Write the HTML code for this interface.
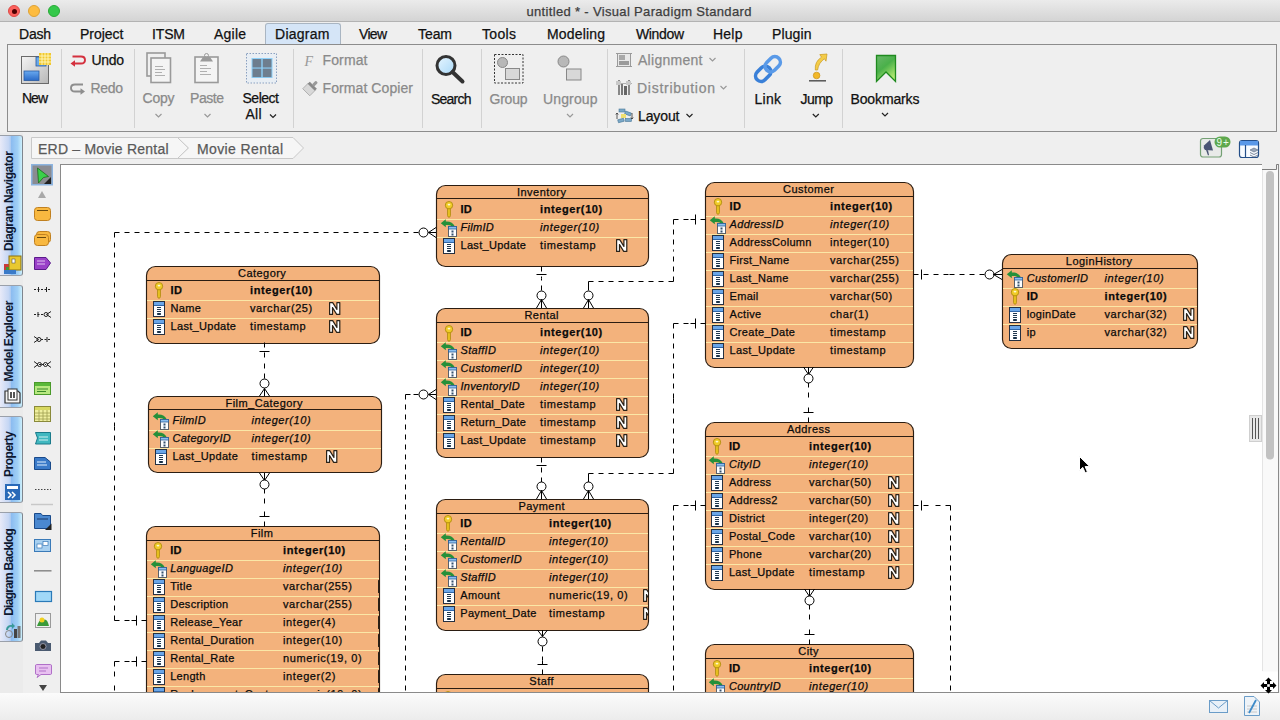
<!DOCTYPE html>
<html><head><meta charset="utf-8"><style>
*{box-sizing:border-box}
html,body{margin:0;padding:0;width:1280px;height:720px;overflow:hidden;background:#efefef;font-family:"Liberation Sans", sans-serif}
.a{position:absolute}
.t{position:absolute;white-space:pre;line-height:1;-webkit-text-stroke:0.25px currentColor}
</style></head><body>
<div class="a" style="left:0;top:0;width:1280px;height:22px;background:linear-gradient(#ebebeb,#d4d4d4);border-bottom:1px solid #b3b3b3"></div><div class="a" style="left:8px;top:5px;width:12px;height:12px;border-radius:50%;background:#fc605c;border:0.5px solid #de4a46"></div><div class="a" style="left:28px;top:5px;width:12px;height:12px;border-radius:50%;background:#fdbc40;border:0.5px solid #dea235"></div><div class="a" style="left:48px;top:5px;width:12px;height:12px;border-radius:50%;background:#34c84a;border:0.5px solid #27aa35"></div><div class="a" style="left:11.5px;top:8.5px;width:5px;height:5px;border-radius:50%;background:#4d0000"></div><div class="a" style="left:264.5px;top:23px;width:76px;height:22px;background:#d5e5f7;border:1px solid #a9b5c2;border-bottom:none;border-radius:3px 3px 0 0"></div><div class="a" style="left:7px;top:44px;width:1270px;height:88px;background:#efefef;border:1px solid #8c8c8c"></div><div class="a" style="left:60.8px;top:49px;width:1px;height:79px;background:#d2d2d2"></div><div class="a" style="left:134.1px;top:49px;width:1px;height:79px;background:#d2d2d2"></div><div class="a" style="left:293.1px;top:49px;width:1px;height:79px;background:#d2d2d2"></div><div class="a" style="left:421.9px;top:49px;width:1px;height:79px;background:#d2d2d2"></div><div class="a" style="left:480.8px;top:49px;width:1px;height:79px;background:#d2d2d2"></div><div class="a" style="left:607.1px;top:49px;width:1px;height:79px;background:#d2d2d2"></div><div class="a" style="left:744.1px;top:49px;width:1px;height:79px;background:#d2d2d2"></div><div class="a" style="left:842.0px;top:49px;width:1px;height:79px;background:#d2d2d2"></div><svg class="a" style="left:0;top:130px" width="320" height="34">
<path d="M31.5 7.5 H177.5 L188.5 18 L177.5 28.5 H31.5 Z" fill="#f6f6f6" stroke="#c9c9c9"/>
<path d="M177.5 7.5 H293 L303.5 18 L293 28.5 H177.5 L188.5 18 Z" fill="#f6f6f6" stroke="#c9c9c9"/>
</svg><div class="a" style="left:60px;top:164px;width:1219px;height:529px;background:#fff;border:1px solid #8a8a8a"></div><div class="a" style="left:0;top:133px;width:23px;height:560px;background:#ebebeb"></div><div class="a" style="left:23px;top:164px;width:37px;height:529px;background:#efefef"></div><svg class="a" style="left:435px;top:184px" width="215" height="84"><rect x="1.5" y="1.5" width="212" height="81" rx="9" ry="9" fill="#f3b27c" stroke="#2b1d12" stroke-width="1.15"/><line x1="1.5" x2="214" y1="14.5" y2="14.5" stroke="#2b1d12" stroke-width="1.15"/><line x1="2" x2="213" y1="35.5" y2="35.5" stroke="#fbe7a6" stroke-width="1"/><line x1="2" x2="213" y1="53.5" y2="53.5" stroke="#fbe7a6" stroke-width="1"/></svg><svg class="a" style="left:145px;top:265px" width="236" height="80"><rect x="1.5" y="1.5" width="233" height="77" rx="9" ry="9" fill="#f3b27c" stroke="#2b1d12" stroke-width="1.15"/><line x1="1.5" x2="234" y1="15.5" y2="15.5" stroke="#2b1d12" stroke-width="1.15"/><line x1="2" x2="234" y1="35.5" y2="35.5" stroke="#fbe7a6" stroke-width="1"/><line x1="2" x2="234" y1="53.5" y2="53.5" stroke="#fbe7a6" stroke-width="1"/></svg><svg class="a" style="left:704px;top:181px" width="211" height="188"><rect x="1.5" y="1.5" width="208" height="185" rx="9" ry="9" fill="#f3b27c" stroke="#2b1d12" stroke-width="1.15"/><line x1="1.5" x2="210" y1="15.5" y2="15.5" stroke="#2b1d12" stroke-width="1.15"/><line x1="2" x2="209" y1="35.5" y2="35.5" stroke="#fbe7a6" stroke-width="1"/><line x1="2" x2="209" y1="53.5" y2="53.5" stroke="#fbe7a6" stroke-width="1"/><line x1="2" x2="209" y1="71.5" y2="71.5" stroke="#fbe7a6" stroke-width="1"/><line x1="2" x2="209" y1="89.5" y2="89.5" stroke="#fbe7a6" stroke-width="1"/><line x1="2" x2="209" y1="107.5" y2="107.5" stroke="#fbe7a6" stroke-width="1"/><line x1="2" x2="209" y1="125.5" y2="125.5" stroke="#fbe7a6" stroke-width="1"/><line x1="2" x2="209" y1="143.5" y2="143.5" stroke="#fbe7a6" stroke-width="1"/><line x1="2" x2="209" y1="161.5" y2="161.5" stroke="#fbe7a6" stroke-width="1"/></svg><svg class="a" style="left:1001px;top:253px" width="198" height="97"><rect x="1.5" y="1.5" width="195" height="94" rx="9" ry="9" fill="#f3b27c" stroke="#2b1d12" stroke-width="1.15"/><line x1="1.5" x2="196" y1="15.5" y2="15.5" stroke="#2b1d12" stroke-width="1.15"/><line x1="2" x2="196" y1="35.5" y2="35.5" stroke="#fbe7a6" stroke-width="1"/><line x1="2" x2="196" y1="53.5" y2="53.5" stroke="#fbe7a6" stroke-width="1"/><line x1="2" x2="196" y1="71.5" y2="71.5" stroke="#fbe7a6" stroke-width="1"/></svg><svg class="a" style="left:435px;top:307px" width="215" height="152"><rect x="1.5" y="1.5" width="212" height="149" rx="9" ry="9" fill="#f3b27c" stroke="#2b1d12" stroke-width="1.15"/><line x1="1.5" x2="214" y1="15.5" y2="15.5" stroke="#2b1d12" stroke-width="1.15"/><line x1="2" x2="213" y1="35.5" y2="35.5" stroke="#fbe7a6" stroke-width="1"/><line x1="2" x2="213" y1="53.5" y2="53.5" stroke="#fbe7a6" stroke-width="1"/><line x1="2" x2="213" y1="71.5" y2="71.5" stroke="#fbe7a6" stroke-width="1"/><line x1="2" x2="213" y1="89.5" y2="89.5" stroke="#fbe7a6" stroke-width="1"/><line x1="2" x2="213" y1="107.5" y2="107.5" stroke="#fbe7a6" stroke-width="1"/><line x1="2" x2="213" y1="125.5" y2="125.5" stroke="#fbe7a6" stroke-width="1"/></svg><svg class="a" style="left:147px;top:395px" width="236" height="79"><rect x="1.5" y="1.5" width="233" height="76" rx="9" ry="9" fill="#f3b27c" stroke="#2b1d12" stroke-width="1.15"/><line x1="1.5" x2="234" y1="14.5" y2="14.5" stroke="#2b1d12" stroke-width="1.15"/><line x1="2" x2="234" y1="35.5" y2="35.5" stroke="#fbe7a6" stroke-width="1"/><line x1="2" x2="234" y1="53.5" y2="53.5" stroke="#fbe7a6" stroke-width="1"/></svg><svg class="a" style="left:145px;top:525px" width="236" height="263"><rect x="1.5" y="1.5" width="233" height="260" rx="9" ry="9" fill="#f3b27c" stroke="#2b1d12" stroke-width="1.15"/><line x1="1.5" x2="234" y1="15.5" y2="15.5" stroke="#2b1d12" stroke-width="1.15"/><line x1="2" x2="234" y1="35.5" y2="35.5" stroke="#fbe7a6" stroke-width="1"/><line x1="2" x2="234" y1="53.5" y2="53.5" stroke="#fbe7a6" stroke-width="1"/><line x1="2" x2="234" y1="71.5" y2="71.5" stroke="#fbe7a6" stroke-width="1"/><line x1="2" x2="234" y1="89.5" y2="89.5" stroke="#fbe7a6" stroke-width="1"/><line x1="2" x2="234" y1="107.5" y2="107.5" stroke="#fbe7a6" stroke-width="1"/><line x1="2" x2="234" y1="125.5" y2="125.5" stroke="#fbe7a6" stroke-width="1"/><line x1="2" x2="234" y1="143.5" y2="143.5" stroke="#fbe7a6" stroke-width="1"/><line x1="2" x2="234" y1="161.5" y2="161.5" stroke="#fbe7a6" stroke-width="1"/></svg><svg class="a" style="left:435px;top:498px" width="215" height="134"><rect x="1.5" y="1.5" width="212" height="131" rx="9" ry="9" fill="#f3b27c" stroke="#2b1d12" stroke-width="1.15"/><line x1="1.5" x2="214" y1="15.5" y2="15.5" stroke="#2b1d12" stroke-width="1.15"/><line x1="2" x2="213" y1="35.5" y2="35.5" stroke="#fbe7a6" stroke-width="1"/><line x1="2" x2="213" y1="53.5" y2="53.5" stroke="#fbe7a6" stroke-width="1"/><line x1="2" x2="213" y1="71.5" y2="71.5" stroke="#fbe7a6" stroke-width="1"/><line x1="2" x2="213" y1="89.5" y2="89.5" stroke="#fbe7a6" stroke-width="1"/><line x1="2" x2="213" y1="107.5" y2="107.5" stroke="#fbe7a6" stroke-width="1"/></svg><svg class="a" style="left:704px;top:421px" width="211" height="170"><rect x="1.5" y="1.5" width="208" height="167" rx="9" ry="9" fill="#f3b27c" stroke="#2b1d12" stroke-width="1.15"/><line x1="1.5" x2="210" y1="15.5" y2="15.5" stroke="#2b1d12" stroke-width="1.15"/><line x1="2" x2="209" y1="35.5" y2="35.5" stroke="#fbe7a6" stroke-width="1"/><line x1="2" x2="209" y1="53.5" y2="53.5" stroke="#fbe7a6" stroke-width="1"/><line x1="2" x2="209" y1="71.5" y2="71.5" stroke="#fbe7a6" stroke-width="1"/><line x1="2" x2="209" y1="89.5" y2="89.5" stroke="#fbe7a6" stroke-width="1"/><line x1="2" x2="209" y1="107.5" y2="107.5" stroke="#fbe7a6" stroke-width="1"/><line x1="2" x2="209" y1="125.5" y2="125.5" stroke="#fbe7a6" stroke-width="1"/><line x1="2" x2="209" y1="143.5" y2="143.5" stroke="#fbe7a6" stroke-width="1"/></svg><svg class="a" style="left:435px;top:673px" width="215" height="123"><rect x="1.5" y="1.5" width="212" height="120" rx="9" ry="9" fill="#f3b27c" stroke="#2b1d12" stroke-width="1.15"/><line x1="1.5" x2="214" y1="15.5" y2="15.5" stroke="#2b1d12" stroke-width="1.15"/><line x1="2" x2="213" y1="35.5" y2="35.5" stroke="#fbe7a6" stroke-width="1"/></svg><svg class="a" style="left:704px;top:643px" width="211" height="123"><rect x="1.5" y="1.5" width="208" height="120" rx="9" ry="9" fill="#f3b27c" stroke="#2b1d12" stroke-width="1.15"/><line x1="1.5" x2="210" y1="15.5" y2="15.5" stroke="#2b1d12" stroke-width="1.15"/><line x1="2" x2="209" y1="35.5" y2="35.5" stroke="#fbe7a6" stroke-width="1"/><line x1="2" x2="209" y1="53.5" y2="53.5" stroke="#fbe7a6" stroke-width="1"/></svg><svg class="a" style="left:0;top:0" width="1280" height="720"><g fill="none" stroke="#000" stroke-width="1"><path d="M146.5 620.5 L130.5 620.5 M114.5 620.5 L130.5 620.5 M114.5 620.5 L114.5 426.5 M114.5 232.5 L114.5 426.5 M114.5 232.5 L266.5 232.5 M418.5 232.5 L266.5 232.5" stroke-dasharray="5 5"/><line x1="136.5" x2="136.5" y1="615.5" y2="625.5"/><ellipse cx="423.5" cy="232.5" rx="4.5" ry="4.5" fill="#fff"/><path d="M428.5 232.5 L436 227.5 M428.5 232.5 L436 232.5 M428.5 232.5 L436 237.5"/><path d="M264.5 342.5 L264.5 360.5 M264.5 378.5 L264.5 360.5" stroke-dasharray="5 5"/><line x1="259.5" x2="269.5" y1="351.5" y2="351.5"/><ellipse cx="264.5" cy="383.5" rx="4.5" ry="4.5" fill="#fff"/><path d="M264.5 388.5 L259.5 396 M264.5 388.5 L264.5 396 M264.5 388.5 L269.5 396"/><path d="M264.5 488.5 L264.5 507.5 M264.5 526.5 L264.5 507.5" stroke-dasharray="5 5"/><path d="M264.5 480.5 L259.5 473 M264.5 480.5 L264.5 473 M264.5 480.5 L269.5 473"/><ellipse cx="264.5" cy="484.5" rx="4.5" ry="4.5" fill="#fff"/><line x1="259.5" x2="269.5" y1="516.5" y2="516.5"/><path d="M541.5 266.5 L541.5 278.5 M541.5 290.5 L541.5 278.5" stroke-dasharray="5 5"/><line x1="536.5" x2="546.5" y1="274.5" y2="274.5"/><ellipse cx="541.5" cy="295.5" rx="4.5" ry="4.5" fill="#fff"/><path d="M541.5 299.5 L536.5 308 M541.5 299.5 L541.5 308 M541.5 299.5 L546.5 308"/><path d="M705.5 219.5 L689.5 219.5 M673.5 219.5 L689.5 219.5 M673.5 219.5 L673.5 250.5 M673.5 281.5 L673.5 250.5 M673.5 281.5 L631 281.5 M588.5 281.5 L631 281.5 M588.5 281.5 L588.5 286 M588.5 290.5 L588.5 286" stroke-dasharray="5 5"/><line x1="695.5" x2="695.5" y1="214.5" y2="224.5"/><ellipse cx="588.5" cy="295.5" rx="4.5" ry="4.5" fill="#fff"/><path d="M588.5 299.5 L583.5 308 M588.5 299.5 L588.5 308 M588.5 299.5 L593.5 308"/><path d="M913.5 274.5 L949 274.5 M984.5 274.5 L949 274.5" stroke-dasharray="5 5"/><line x1="921.5" x2="921.5" y1="269.5" y2="279.5"/><ellipse cx="989.5" cy="274.5" rx="4.5" ry="4.5" fill="#fff"/><path d="M993.5 274.5 L1002 269.5 M993.5 274.5 L1002 274.5 M993.5 274.5 L1002 279.5"/><path d="M541.5 457.5 L541.5 470 M541.5 482.5 L541.5 470" stroke-dasharray="5 5"/><line x1="536.5" x2="546.5" y1="465.5" y2="465.5"/><ellipse cx="541.5" cy="486.5" rx="4.5" ry="4.5" fill="#fff"/><path d="M541.5 490.5 L536.5 499 M541.5 490.5 L541.5 499 M541.5 490.5 L546.5 499"/><path d="M705.5 323.5 L689.5 323.5 M673.5 323.5 L689.5 323.5 M673.5 323.5 L673.5 398.5 M673.5 473.5 L673.5 398.5 M673.5 473.5 L631 473.5 M588.5 473.5 L631 473.5 M588.5 473.5 L588.5 478 M588.5 482.5 L588.5 478" stroke-dasharray="5 5"/><line x1="695.5" x2="695.5" y1="318.5" y2="328.5"/><ellipse cx="588.5" cy="486.5" rx="4.5" ry="4.5" fill="#fff"/><path d="M588.5 490.5 L583.5 499 M588.5 490.5 L588.5 499 M588.5 490.5 L593.5 499"/><path d="M808.5 382.5 L808.5 402.5 M808.5 422.5 L808.5 402.5" stroke-dasharray="5 5"/><path d="M808.5 374.5 L803.5 367 M808.5 374.5 L808.5 367 M808.5 374.5 L813.5 367"/><ellipse cx="808.5" cy="378.5" rx="4.5" ry="4.5" fill="#fff"/><line x1="803.5" x2="813.5" y1="412.5" y2="412.5"/><path d="M809.5 604.5 L809.5 624.5 M809.5 644.5 L809.5 624.5" stroke-dasharray="5 5"/><path d="M809.5 596.5 L804.5 589 M809.5 596.5 L809.5 589 M809.5 596.5 L814.5 589"/><ellipse cx="809.5" cy="600.5" rx="4.5" ry="4.5" fill="#fff"/><line x1="804.5" x2="814.5" y1="634.5" y2="634.5"/><path d="M542.5 646.5 L542.5 660.5 M542.5 674.5 L542.5 660.5" stroke-dasharray="5 5"/><path d="M542.5 636.5 L537.5 630 M542.5 636.5 L542.5 630 M542.5 636.5 L547.5 630"/><ellipse cx="542.5" cy="641.5" rx="4.5" ry="4.5" fill="#fff"/><line x1="537.5" x2="547.5" y1="664.5" y2="664.5"/><path d="M418.5 394.5 L412 394.5 M405.5 394.5 L412 394.5 M405.5 394.5 L405.5 547.5 M405.5 700.5 L405.5 547.5" stroke-dasharray="5 5"/><ellipse cx="423.5" cy="394.5" rx="4.5" ry="4.5" fill="#fff"/><path d="M428.5 394.5 L436 389.5 M428.5 394.5 L436 394.5 M428.5 394.5 L436 399.5"/><path d="M146.5 661.5 L130.5 661.5 M114.5 661.5 L130.5 661.5 M114.5 661.5 L114.5 681 M114.5 700.5 L114.5 681" stroke-dasharray="5 5"/><line x1="136.5" x2="136.5" y1="656.5" y2="666.5"/><path d="M705.5 505.5 L689.5 505.5 M673.5 505.5 L689.5 505.5 M673.5 505.5 L673.5 603 M673.5 700.5 L673.5 603" stroke-dasharray="5 5"/><line x1="695.5" x2="695.5" y1="500.5" y2="510.5"/><path d="M913.5 505.5 L932 505.5 M950.5 505.5 L932 505.5 M950.5 505.5 L950.5 603 M950.5 700.5 L950.5 603" stroke-dasharray="5 5"/><line x1="921.5" x2="921.5" y1="500.5" y2="510.5"/></g></svg><svg class="a" style="left:0;top:44px" width="940" height="88" viewBox="0 44 940 88">
<defs>
<linearGradient id="gNew" x1="0" y1="0" x2="1" y2="1"><stop offset="0" stop-color="#f4f4f4"/><stop offset="1" stop-color="#b8b8b8"/></linearGradient>
<linearGradient id="gBlue" x1="0" y1="0" x2="0" y2="1"><stop offset="0" stop-color="#6aaaf0"/><stop offset="1" stop-color="#2a6ac8"/></linearGradient>
<linearGradient id="gBk" x1="0" y1="0" x2="0.6" y2="1"><stop offset="0" stop-color="#6ab86a"/><stop offset="0.5" stop-color="#4ab04a"/><stop offset="1" stop-color="#b0e870"/></linearGradient>
<linearGradient id="gLens" x1="0" y1="0" x2="1" y2="1"><stop offset="0" stop-color="#e8f6ff"/><stop offset="1" stop-color="#a8d8f8"/></linearGradient>
</defs>
<!-- New -->
<rect x="21.5" y="56.5" width="27" height="27" fill="url(#gNew)" stroke="#6a6a6a"/>
<rect x="24" y="71" width="15" height="9.5" fill="url(#gBlue)" stroke="#2a5aa0" stroke-width="0.8"/>
<rect x="36" y="57" width="10" height="9" fill="#6aa8e8" stroke="#2a5aa0" stroke-width="0.8"/>
<rect x="39" y="53" width="12" height="12" fill="#f0c830"/>
<path d="M42 53 V65 M45 53 V65 M48 53 V65 M39 56 H51 M39 59 H51 M39 62 H51" stroke="#fff8c0" stroke-width="0.9"/>
<!-- Undo -->
<path d="M72.5 56.5 H81 Q85 56.5 85 60 Q85 63.5 81 63.5 H74" fill="none" stroke="#d4303e" stroke-width="1.9"/>
<path d="M70.5 63.5 L75 60.3 V66.7 Z" fill="#d4303e"/>
<!-- Redo -->
<path d="M83 84.5 H75 Q71 84.5 71 88 Q71 91.5 75 91.5 H82" fill="none" stroke="#8e8e8e" stroke-width="1.9"/>
<path d="M85 91.5 L80.5 88.3 V94.7 Z" fill="#8e8e8e"/>
<!-- Copy -->
<rect x="147" y="53" width="18" height="23" fill="#f0f0f0" stroke="#9a9a9a" stroke-width="1.6"/>
<rect x="151" y="58" width="19.5" height="24.5" fill="#f4f4f4" stroke="#9a9a9a" stroke-width="1.6"/>
<path d="M155 66.5 H163 M155 69.5 H165 M155 72.5 H162 M155 75.5 H165" stroke="#b0b0b0"/>
<!-- Paste -->
<rect x="195" y="57" width="23" height="25.5" fill="#f4f4f4" stroke="#9a9a9a" stroke-width="1.6"/>
<path d="M200 61.5 L203 57 H210 L213 61.5 Z" fill="#9a9a9a"/><circle cx="206.5" cy="55.5" r="2" fill="none" stroke="#9a9a9a"/>
<path d="M200 65.5 H207 M200 68.5 H211 M200 71.5 H207 M200 74.5 H211" stroke="#b0b0b0"/>
<!-- Select All -->
<rect x="246.5" y="53.5" width="30" height="29.5" fill="#e8eef4" stroke="#8aa0c0" stroke-dasharray="1.5 1.5"/>
<rect x="251.5" y="58" width="21" height="20" fill="#8ed0f8"/>
<rect x="252.5" y="59" width="8.8" height="8.5" fill="#6e7e8e"/><rect x="262.7" y="59" width="8.8" height="8.5" fill="#6e7e8e"/>
<rect x="252.5" y="68.6" width="8.8" height="8.5" fill="#6e7e8e"/><rect x="262.7" y="68.6" width="8.8" height="8.5" fill="#6e7e8e"/>
<!-- Format F -->
<text x="304.5" y="65.5" font-family="Liberation Serif" font-style="italic" font-size="14" fill="#9a9a9a">F</text>
<!-- Format copier brush -->
<g transform="rotate(45 310.5 88)">
<rect x="305.5" y="86" width="10" height="8" fill="#d8d8d8" stroke="#a8a8a8" stroke-width="0.8"/>
<rect x="305.5" y="84" width="10" height="3" fill="#8a8a8a"/>
<rect x="309" y="79" width="3" height="5.5" rx="1" fill="#9a9a9a"/>
</g>
<!-- Search -->
<circle cx="446" cy="65.5" r="9" fill="url(#gLens)" stroke="#333" stroke-width="3"/>
<path d="M452.5 72 L462.5 81.5" stroke="#333" stroke-width="4" stroke-linecap="round"/>
<!-- Group -->
<rect x="494.5" y="54.5" width="28.5" height="28.5" fill="none" stroke="#333" stroke-dasharray="2 1.5"/>
<circle cx="502.5" cy="62.5" r="5" fill="#b8b8b8" stroke="#888"/>
<rect x="505.5" y="68.5" width="14" height="11" fill="#d8d8d8" stroke="#888"/>
<!-- Ungroup -->
<circle cx="563.5" cy="61.5" r="5.5" fill="#b8b8b8" stroke="#888"/>
<rect x="566.5" y="69" width="14.5" height="11" fill="#d8d8d8" stroke="#888"/>
<!-- Alignment icon -->
<rect x="617.5" y="53.5" width="13" height="13" fill="#e8e8e8" stroke="#9a9a9a"/>
<path d="M616 53.5 H619 M629 53.5 H632 M616 66.5 H619 M629 66.5 H632" stroke="#9a9a9a"/>
<rect x="619" y="55" width="6" height="5" fill="#a8a8a8"/><rect x="619" y="61" width="10" height="4" fill="#9a9a9a"/>
<!-- Distribution icon -->
<path d="M616 83.5 H632" stroke="#b0b0b0"/>
<rect x="618" y="80" width="2" height="15" fill="#888"/><rect x="621" y="84" width="2" height="11" fill="#777"/><rect x="624" y="86" width="3" height="9" fill="#666"/><rect x="628" y="80" width="2" height="15" fill="#888"/>
<rect x="616" y="81" width="5" height="4" fill="#c8c8c8"/><rect x="626" y="81" width="5" height="4" fill="#c8c8c8"/>
<!-- Layout icon -->
<rect x="619" y="109" width="6" height="3" fill="#7aa8c8" stroke="#4a7898" stroke-width="0.6"/>
<rect x="625" y="112" width="6" height="3" fill="#7aa8c8" stroke="#4a7898" stroke-width="0.6" transform="rotate(20 628 113.5)"/>
<rect x="621" y="114" width="5" height="4" fill="#f0e070"/>
<rect x="618" y="119" width="6" height="3" fill="#7aa8c8" stroke="#4a7898" stroke-width="0.6" transform="rotate(-15 621 120.5)"/>
<rect x="625.5" y="118.5" width="6" height="3" fill="#7aa8c8" stroke="#4a7898" stroke-width="0.6"/>
<path d="M617 113 V119 M615.8 114.5 L617 113 L618.2 114.5 M632 113 V119 M630.8 117.5 L632 119 L633.2 117.5" stroke="#333" stroke-width="0.8" fill="none"/>
<!-- Link -->
<g transform="rotate(-45 768.5 68.5)"><rect x="752.5" y="63" width="17" height="11" rx="5.5" fill="none" stroke="#3a80d8" stroke-width="3.6"/><rect x="766" y="63" width="17" height="11" rx="5.5" fill="none" stroke="#5a9ae8" stroke-width="3.6"/></g>
<!-- Jump -->
<path d="M815.3 70 Q814.5 61.5 821.5 57.2 L819.8 54.6 L827 54 L826 61.2 L824.4 58.8 Q818.6 62.8 817.6 70 Z" fill="#f4cc48" stroke="#c89a20" stroke-width="0.7"/>
<circle cx="816.6" cy="75.5" r="3.3" fill="#f2b828" stroke="#c8901a" stroke-width="0.7"/>
<line x1="809" y1="80.8" x2="826" y2="80.8" stroke="#555" stroke-width="1.5"/>
<!-- Bookmark -->
<path d="M876.5 55.5 H895.5 V81.5 L886 72 L876.5 81.5 Z" fill="url(#gBk)" stroke="#1f8a1f" stroke-width="1.3"/>
<!-- chevrons -->
<g fill="none" stroke="#999" stroke-width="1.2">
<path d="M155.5 114 L158.5 117 L161.5 114"/><path d="M204.5 114 L207.5 117 L210.5 114"/><path d="M567 114 L570 117 L573 114"/>
<path d="M709.5 58 L712.5 61 L715.5 58"/><path d="M720.5 86 L723.5 89 L726.5 86"/>
</g>
<g fill="none" stroke="#222" stroke-width="1.2">
<path d="M270 114.5 L273 117.5 L276 114.5"/><path d="M686.5 114 L689.5 117 L692.5 114"/><path d="M812.8 114 L815.8 117 L818.8 114"/><path d="M882 113 L885 116 L888 113"/>
</g>
</svg><svg class="a" style="left:1196px;top:134px" width="70" height="28">
<rect x="4.5" y="4.5" width="21" height="18.5" rx="2.5" fill="#e8eae8" stroke="#74a074" stroke-width="1.2"/>
<path d="M8 11.5 Q7 14 9 16 L17 16.5 L14 6 Z" fill="#4a5474"/><path d="M10 16 L12 21.5 L13 21 L12 16.3 Z" fill="#4a5474"/>
<rect x="18.5" y="2.5" width="16" height="11" rx="5.5" fill="#5ea84e"/>
<text x="20.5" y="11.6" font-family="Liberation Sans" font-size="10" letter-spacing="1" fill="#eaffea">9+</text>
<rect x="43.5" y="6.5" width="19" height="17" rx="2.5" fill="#f8fbff" stroke="#244e88" stroke-width="1.2"/>
<rect x="44" y="7" width="18" height="4.5" fill="#5a98e8"/>
<line x1="49.5" y1="11" x2="49.5" y2="23" stroke="#244e88" stroke-width="1.2"/>
<path d="M54 16 L58 14 L62 16 L58 18 Z" fill="#9aa6b8" stroke="#5a6a80" stroke-width="0.6"/><path d="M54 18.5 L58 20.5 L62 18.5" fill="none" stroke="#5a6a80" stroke-width="0.8"/><path d="M54 21 L58 23 L62 21" fill="none" stroke="#5a6a80" stroke-width="0.8"/>
</svg>
<div class="t" style="left:526.50px;top:4.60px;font-size:13px;color:#3d3d3d;letter-spacing:0.332px">untitled * - Visual Paradigm Standard</div>
<div class="t" style="left:19.00px;top:26.65px;font-size:14px;color:#111;letter-spacing:-0.229px">Dash</div>
<div class="t" style="left:80.00px;top:26.65px;font-size:14px;color:#111;letter-spacing:-0.013px">Project</div>
<div class="t" style="left:152.00px;top:26.65px;font-size:14px;color:#111;letter-spacing:-0.151px">ITSM</div>
<div class="t" style="left:214.00px;top:26.65px;font-size:14px;color:#111;letter-spacing:0.215px">Agile</div>
<div class="t" style="left:275.00px;top:26.65px;font-size:14px;color:#111;letter-spacing:0.266px">Diagram</div>
<div class="t" style="left:359.00px;top:26.65px;font-size:14px;color:#111;letter-spacing:-0.698px">View</div>
<div class="t" style="left:418.00px;top:26.65px;font-size:14px;color:#111;letter-spacing:-0.078px">Team</div>
<div class="t" style="left:482.00px;top:26.65px;font-size:14px;color:#111;letter-spacing:0.328px">Tools</div>
<div class="t" style="left:547.00px;top:26.65px;font-size:14px;color:#111;letter-spacing:0.167px">Modeling</div>
<div class="t" style="left:636.00px;top:26.65px;font-size:14px;color:#111;letter-spacing:-0.359px">Window</div>
<div class="t" style="left:713.00px;top:26.65px;font-size:14px;color:#111;letter-spacing:0.234px">Help</div>
<div class="t" style="left:772.00px;top:26.65px;font-size:14px;color:#111;letter-spacing:0.116px">Plugin</div>
<div class="t" style="left:22.00px;top:91.45px;font-size:14px;color:#111;letter-spacing:-1.008px">New</div>
<div class="t" style="left:91.50px;top:52.95px;font-size:14px;color:#111;letter-spacing:-0.323px">Undo</div>
<div class="t" style="left:90.50px;top:80.95px;font-size:14px;color:#8a8a8a;letter-spacing:-0.323px">Redo</div>
<div class="t" style="left:142.50px;top:90.55px;font-size:14px;color:#8a8a8a;letter-spacing:-0.229px">Copy</div>
<div class="t" style="left:190.00px;top:90.55px;font-size:14px;color:#8a8a8a;letter-spacing:-0.453px">Paste</div>
<div class="t" style="left:242.50px;top:90.55px;font-size:14px;color:#111;letter-spacing:-0.484px">Select</div>
<div class="t" style="left:245.50px;top:106.55px;font-size:14px;color:#111;letter-spacing:0.219px">All</div>
<div class="t" style="left:322.50px;top:53.15px;font-size:14px;color:#8a8a8a;letter-spacing:0.131px">Format</div>
<div class="t" style="left:322.50px;top:80.95px;font-size:14px;color:#8a8a8a;letter-spacing:0.086px">Format Copier</div>
<div class="t" style="left:431.00px;top:91.55px;font-size:14px;color:#111;letter-spacing:-0.772px">Search</div>
<div class="t" style="left:489.50px;top:91.55px;font-size:14px;color:#8a8a8a;letter-spacing:-0.230px">Group</div>
<div class="t" style="left:543.00px;top:91.55px;font-size:14px;color:#8a8a8a;letter-spacing:0.133px">Ungroup</div>
<div class="t" style="left:638.00px;top:53.15px;font-size:14px;color:#8a8a8a;letter-spacing:0.279px">Alignment</div>
<div class="t" style="left:637.00px;top:80.95px;font-size:14px;color:#8a8a8a;letter-spacing:0.724px">Distribution</div>
<div class="t" style="left:638.00px;top:108.75px;font-size:14px;color:#111;letter-spacing:-0.109px">Layout</div>
<div class="t" style="left:754.50px;top:91.55px;font-size:14px;color:#111;letter-spacing:0.271px">Link</div>
<div class="t" style="left:800.50px;top:91.55px;font-size:14px;color:#111;letter-spacing:-0.578px">Jump</div>
<div class="t" style="left:850.50px;top:91.55px;font-size:14px;color:#111;letter-spacing:-0.129px">Bookmarks</div>
<div class="t" style="left:38.00px;top:141.55px;font-size:14px;color:#5a5a5a;letter-spacing:0.216px">ERD – Movie Rental</div>
<div class="t" style="left:197.00px;top:141.55px;font-size:14px;color:#5a5a5a;letter-spacing:0.391px">Movie Rental</div>
<div class="t" style="left:517.05px;top:186.69px;font-size:11px;color:#0a0a0a;letter-spacing:0.450px">Inventory</div>
<div class="t" style="left:460.50px;top:203.69px;font-size:11px;color:#0a0a0a;font-weight:bold;letter-spacing:0.300px">ID</div>
<div class="t" style="left:540.00px;top:203.69px;font-size:11px;color:#0a0a0a;font-weight:bold;letter-spacing:0.600px">integer(10)</div>
<div class="t" style="left:460.50px;top:221.69px;font-size:11px;color:#0a0a0a;font-style:italic;letter-spacing:0.300px">FilmID</div>
<div class="t" style="left:540.00px;top:221.69px;font-size:11px;color:#0a0a0a;font-style:italic;letter-spacing:0.600px">integer(10)</div>
<div class="t" style="left:460.50px;top:239.69px;font-size:11px;color:#0a0a0a;letter-spacing:0.300px">Last_Update</div>
<div class="t" style="left:540.00px;top:239.69px;font-size:11px;color:#0a0a0a;letter-spacing:0.600px">timestamp</div>
<div class="t" style="left:238.08px;top:267.69px;font-size:11px;color:#0a0a0a;letter-spacing:0.450px">Category</div>
<div class="t" style="left:170.60px;top:284.69px;font-size:11px;color:#0a0a0a;font-weight:bold;letter-spacing:0.300px">ID</div>
<div class="t" style="left:250.00px;top:284.69px;font-size:11px;color:#0a0a0a;font-weight:bold;letter-spacing:0.600px">integer(10)</div>
<div class="t" style="left:170.60px;top:302.69px;font-size:11px;color:#0a0a0a;letter-spacing:0.300px">Name</div>
<div class="t" style="left:250.00px;top:302.69px;font-size:11px;color:#0a0a0a;letter-spacing:0.600px">varchar(25)</div>
<div class="t" style="left:170.60px;top:320.69px;font-size:11px;color:#0a0a0a;letter-spacing:0.300px">Last_Update</div>
<div class="t" style="left:250.00px;top:320.69px;font-size:11px;color:#0a0a0a;letter-spacing:0.600px">timestamp</div>
<div class="t" style="left:783.06px;top:184.09px;font-size:11px;color:#0a0a0a;letter-spacing:0.450px">Customer</div>
<div class="t" style="left:729.60px;top:201.09px;font-size:11px;color:#0a0a0a;font-weight:bold;letter-spacing:0.300px">ID</div>
<div class="t" style="left:830.00px;top:201.09px;font-size:11px;color:#0a0a0a;font-weight:bold;letter-spacing:0.600px">integer(10)</div>
<div class="t" style="left:729.60px;top:219.09px;font-size:11px;color:#0a0a0a;font-style:italic;letter-spacing:0.300px">AddressID</div>
<div class="t" style="left:830.00px;top:219.09px;font-size:11px;color:#0a0a0a;font-style:italic;letter-spacing:0.600px">integer(10)</div>
<div class="t" style="left:729.60px;top:237.09px;font-size:11px;color:#0a0a0a;letter-spacing:0.300px">AddressColumn</div>
<div class="t" style="left:830.00px;top:237.09px;font-size:11px;color:#0a0a0a;letter-spacing:0.600px">integer(10)</div>
<div class="t" style="left:729.60px;top:255.09px;font-size:11px;color:#0a0a0a;letter-spacing:0.300px">First_Name</div>
<div class="t" style="left:830.00px;top:255.09px;font-size:11px;color:#0a0a0a;letter-spacing:0.600px">varchar(255)</div>
<div class="t" style="left:729.60px;top:273.09px;font-size:11px;color:#0a0a0a;letter-spacing:0.300px">Last_Name</div>
<div class="t" style="left:830.00px;top:273.09px;font-size:11px;color:#0a0a0a;letter-spacing:0.600px">varchar(255)</div>
<div class="t" style="left:729.60px;top:291.09px;font-size:11px;color:#0a0a0a;letter-spacing:0.300px">Email</div>
<div class="t" style="left:830.00px;top:291.09px;font-size:11px;color:#0a0a0a;letter-spacing:0.600px">varchar(50)</div>
<div class="t" style="left:729.60px;top:309.09px;font-size:11px;color:#0a0a0a;letter-spacing:0.300px">Active</div>
<div class="t" style="left:830.00px;top:309.09px;font-size:11px;color:#0a0a0a;letter-spacing:0.600px">char(1)</div>
<div class="t" style="left:729.60px;top:327.09px;font-size:11px;color:#0a0a0a;letter-spacing:0.300px">Create_Date</div>
<div class="t" style="left:830.00px;top:327.09px;font-size:11px;color:#0a0a0a;letter-spacing:0.600px">timestamp</div>
<div class="t" style="left:729.60px;top:345.09px;font-size:11px;color:#0a0a0a;letter-spacing:0.300px">Last_Update</div>
<div class="t" style="left:830.00px;top:345.09px;font-size:11px;color:#0a0a0a;letter-spacing:0.600px">timestamp</div>
<div class="t" style="left:1065.83px;top:256.19px;font-size:11px;color:#0a0a0a;letter-spacing:0.450px">LoginHistory</div>
<div class="t" style="left:1026.70px;top:273.19px;font-size:11px;color:#0a0a0a;font-style:italic;letter-spacing:0.300px">CustomerID</div>
<div class="t" style="left:1104.50px;top:273.19px;font-size:11px;color:#0a0a0a;font-style:italic;letter-spacing:0.600px">integer(10)</div>
<div class="t" style="left:1026.70px;top:291.19px;font-size:11px;color:#0a0a0a;font-weight:bold;letter-spacing:0.300px">ID</div>
<div class="t" style="left:1104.50px;top:291.19px;font-size:11px;color:#0a0a0a;font-weight:bold;letter-spacing:0.600px">integer(10)</div>
<div class="t" style="left:1026.70px;top:309.19px;font-size:11px;color:#0a0a0a;letter-spacing:0.300px">loginDate</div>
<div class="t" style="left:1104.50px;top:309.19px;font-size:11px;color:#0a0a0a;letter-spacing:0.600px">varchar(32)</div>
<div class="t" style="left:1026.70px;top:327.19px;font-size:11px;color:#0a0a0a;letter-spacing:0.300px">ip</div>
<div class="t" style="left:1104.50px;top:327.19px;font-size:11px;color:#0a0a0a;letter-spacing:0.600px">varchar(32)</div>
<div class="t" style="left:524.45px;top:310.29px;font-size:11px;color:#0a0a0a;letter-spacing:0.450px">Rental</div>
<div class="t" style="left:460.50px;top:327.29px;font-size:11px;color:#0a0a0a;font-weight:bold;letter-spacing:0.300px">ID</div>
<div class="t" style="left:540.00px;top:327.29px;font-size:11px;color:#0a0a0a;font-weight:bold;letter-spacing:0.600px">integer(10)</div>
<div class="t" style="left:460.50px;top:345.29px;font-size:11px;color:#0a0a0a;font-style:italic;letter-spacing:0.300px">StaffID</div>
<div class="t" style="left:540.00px;top:345.29px;font-size:11px;color:#0a0a0a;font-style:italic;letter-spacing:0.600px">integer(10)</div>
<div class="t" style="left:460.50px;top:363.29px;font-size:11px;color:#0a0a0a;font-style:italic;letter-spacing:0.300px">CustomerID</div>
<div class="t" style="left:540.00px;top:363.29px;font-size:11px;color:#0a0a0a;font-style:italic;letter-spacing:0.600px">integer(10)</div>
<div class="t" style="left:460.50px;top:381.29px;font-size:11px;color:#0a0a0a;font-style:italic;letter-spacing:0.300px">InventoryID</div>
<div class="t" style="left:540.00px;top:381.29px;font-size:11px;color:#0a0a0a;font-style:italic;letter-spacing:0.600px">integer(10)</div>
<div class="t" style="left:460.50px;top:399.29px;font-size:11px;color:#0a0a0a;letter-spacing:0.300px">Rental_Date</div>
<div class="t" style="left:540.00px;top:399.29px;font-size:11px;color:#0a0a0a;letter-spacing:0.600px">timestamp</div>
<div class="t" style="left:460.50px;top:417.29px;font-size:11px;color:#0a0a0a;letter-spacing:0.300px">Return_Date</div>
<div class="t" style="left:540.00px;top:417.29px;font-size:11px;color:#0a0a0a;letter-spacing:0.600px">timestamp</div>
<div class="t" style="left:460.50px;top:435.29px;font-size:11px;color:#0a0a0a;letter-spacing:0.300px">Last_Update</div>
<div class="t" style="left:540.00px;top:435.29px;font-size:11px;color:#0a0a0a;letter-spacing:0.600px">timestamp</div>
<div class="t" style="left:225.51px;top:397.59px;font-size:11px;color:#0a0a0a;letter-spacing:0.450px">Film_Category</div>
<div class="t" style="left:172.40px;top:414.59px;font-size:11px;color:#0a0a0a;font-style:italic;letter-spacing:0.300px">FilmID</div>
<div class="t" style="left:251.50px;top:414.59px;font-size:11px;color:#0a0a0a;font-style:italic;letter-spacing:0.600px">integer(10)</div>
<div class="t" style="left:172.40px;top:432.59px;font-size:11px;color:#0a0a0a;font-style:italic;letter-spacing:0.300px">CategoryID</div>
<div class="t" style="left:251.50px;top:432.59px;font-size:11px;color:#0a0a0a;font-style:italic;letter-spacing:0.600px">integer(10)</div>
<div class="t" style="left:172.40px;top:450.59px;font-size:11px;color:#0a0a0a;letter-spacing:0.300px">Last_Update</div>
<div class="t" style="left:251.50px;top:450.59px;font-size:11px;color:#0a0a0a;letter-spacing:0.600px">timestamp</div>
<div class="t" style="left:250.81px;top:527.99px;font-size:11px;color:#0a0a0a;letter-spacing:0.450px">Film</div>
<div class="t" style="left:170.20px;top:544.99px;font-size:11px;color:#0a0a0a;font-weight:bold;letter-spacing:0.300px">ID</div>
<div class="t" style="left:283.00px;top:544.99px;font-size:11px;color:#0a0a0a;font-weight:bold;letter-spacing:0.600px">integer(10)</div>
<div class="t" style="left:170.20px;top:562.99px;font-size:11px;color:#0a0a0a;font-style:italic;letter-spacing:0.300px">LanguageID</div>
<div class="t" style="left:283.00px;top:562.99px;font-size:11px;color:#0a0a0a;font-style:italic;letter-spacing:0.600px">integer(10)</div>
<div class="t" style="left:170.20px;top:580.99px;font-size:11px;color:#0a0a0a;letter-spacing:0.300px">Title</div>
<div class="t" style="left:283.00px;top:580.99px;font-size:11px;color:#0a0a0a;letter-spacing:0.600px">varchar(255)</div>
<div class="t" style="left:170.20px;top:598.99px;font-size:11px;color:#0a0a0a;letter-spacing:0.300px">Description</div>
<div class="t" style="left:283.00px;top:598.99px;font-size:11px;color:#0a0a0a;letter-spacing:0.600px">varchar(255)</div>
<div class="t" style="left:170.20px;top:616.99px;font-size:11px;color:#0a0a0a;letter-spacing:0.300px">Release_Year</div>
<div class="t" style="left:283.00px;top:616.99px;font-size:11px;color:#0a0a0a;letter-spacing:0.600px">integer(4)</div>
<div class="t" style="left:170.20px;top:634.99px;font-size:11px;color:#0a0a0a;letter-spacing:0.300px">Rental_Duration</div>
<div class="t" style="left:283.00px;top:634.99px;font-size:11px;color:#0a0a0a;letter-spacing:0.600px">integer(10)</div>
<div class="t" style="left:170.20px;top:652.99px;font-size:11px;color:#0a0a0a;letter-spacing:0.300px">Rental_Rate</div>
<div class="t" style="left:283.00px;top:652.99px;font-size:11px;color:#0a0a0a;letter-spacing:0.600px">numeric(19, 0)</div>
<div class="t" style="left:170.20px;top:670.99px;font-size:11px;color:#0a0a0a;letter-spacing:0.300px">Length</div>
<div class="t" style="left:283.00px;top:670.99px;font-size:11px;color:#0a0a0a;letter-spacing:0.600px">integer(2)</div>
<div class="t" style="left:170.20px;top:688.99px;font-size:11px;color:#0a0a0a;letter-spacing:0.300px">Replacement_Cost</div>
<div class="t" style="left:283.00px;top:688.99px;font-size:11px;color:#0a0a0a;letter-spacing:0.600px">numeric(19, 0)</div>
<div class="t" style="left:518.42px;top:500.89px;font-size:11px;color:#0a0a0a;letter-spacing:0.450px">Payment</div>
<div class="t" style="left:460.30px;top:517.89px;font-size:11px;color:#0a0a0a;font-weight:bold;letter-spacing:0.300px">ID</div>
<div class="t" style="left:549.00px;top:517.89px;font-size:11px;color:#0a0a0a;font-weight:bold;letter-spacing:0.600px">integer(10)</div>
<div class="t" style="left:460.30px;top:535.89px;font-size:11px;color:#0a0a0a;font-style:italic;letter-spacing:0.300px">RentalID</div>
<div class="t" style="left:549.00px;top:535.89px;font-size:11px;color:#0a0a0a;font-style:italic;letter-spacing:0.600px">integer(10)</div>
<div class="t" style="left:460.30px;top:553.89px;font-size:11px;color:#0a0a0a;font-style:italic;letter-spacing:0.300px">CustomerID</div>
<div class="t" style="left:549.00px;top:553.89px;font-size:11px;color:#0a0a0a;font-style:italic;letter-spacing:0.600px">integer(10)</div>
<div class="t" style="left:460.30px;top:571.89px;font-size:11px;color:#0a0a0a;font-style:italic;letter-spacing:0.300px">StaffID</div>
<div class="t" style="left:549.00px;top:571.89px;font-size:11px;color:#0a0a0a;font-style:italic;letter-spacing:0.600px">integer(10)</div>
<div class="t" style="left:460.30px;top:589.89px;font-size:11px;color:#0a0a0a;letter-spacing:0.300px">Amount</div>
<div class="t" style="left:549.00px;top:589.89px;font-size:11px;color:#0a0a0a;letter-spacing:0.600px">numeric(19, 0)</div>
<div class="t" style="left:460.30px;top:607.89px;font-size:11px;color:#0a0a0a;letter-spacing:0.300px">Payment_Date</div>
<div class="t" style="left:549.00px;top:607.89px;font-size:11px;color:#0a0a0a;letter-spacing:0.600px">timestamp</div>
<div class="t" style="left:786.94px;top:423.79px;font-size:11px;color:#0a0a0a;letter-spacing:0.450px">Address</div>
<div class="t" style="left:728.90px;top:440.79px;font-size:11px;color:#0a0a0a;font-weight:bold;letter-spacing:0.300px">ID</div>
<div class="t" style="left:809.00px;top:440.79px;font-size:11px;color:#0a0a0a;font-weight:bold;letter-spacing:0.600px">integer(10)</div>
<div class="t" style="left:728.90px;top:458.79px;font-size:11px;color:#0a0a0a;font-style:italic;letter-spacing:0.300px">CityID</div>
<div class="t" style="left:809.00px;top:458.79px;font-size:11px;color:#0a0a0a;font-style:italic;letter-spacing:0.600px">integer(10)</div>
<div class="t" style="left:728.90px;top:476.79px;font-size:11px;color:#0a0a0a;letter-spacing:0.300px">Address</div>
<div class="t" style="left:809.00px;top:476.79px;font-size:11px;color:#0a0a0a;letter-spacing:0.600px">varchar(50)</div>
<div class="t" style="left:728.90px;top:494.79px;font-size:11px;color:#0a0a0a;letter-spacing:0.300px">Address2</div>
<div class="t" style="left:809.00px;top:494.79px;font-size:11px;color:#0a0a0a;letter-spacing:0.600px">varchar(50)</div>
<div class="t" style="left:728.90px;top:512.79px;font-size:11px;color:#0a0a0a;letter-spacing:0.300px">District</div>
<div class="t" style="left:809.00px;top:512.79px;font-size:11px;color:#0a0a0a;letter-spacing:0.600px">integer(20)</div>
<div class="t" style="left:728.90px;top:530.79px;font-size:11px;color:#0a0a0a;letter-spacing:0.300px">Postal_Code</div>
<div class="t" style="left:809.00px;top:530.79px;font-size:11px;color:#0a0a0a;letter-spacing:0.600px">varchar(10)</div>
<div class="t" style="left:728.90px;top:548.79px;font-size:11px;color:#0a0a0a;letter-spacing:0.300px">Phone</div>
<div class="t" style="left:809.00px;top:548.79px;font-size:11px;color:#0a0a0a;letter-spacing:0.600px">varchar(20)</div>
<div class="t" style="left:728.90px;top:566.79px;font-size:11px;color:#0a0a0a;letter-spacing:0.300px">Last_Update</div>
<div class="t" style="left:809.00px;top:566.79px;font-size:11px;color:#0a0a0a;letter-spacing:0.600px">timestamp</div>
<div class="t" style="left:529.36px;top:676.29px;font-size:11px;color:#0a0a0a;letter-spacing:0.450px">Staff</div>
<div class="t" style="left:460.30px;top:693.29px;font-size:11px;color:#0a0a0a;font-weight:bold;letter-spacing:0.300px">ID</div>
<div class="t" style="left:549.00px;top:693.29px;font-size:11px;color:#0a0a0a;font-weight:bold;letter-spacing:0.600px">integer(10)</div>
<div class="t" style="left:460.30px;top:711.29px;font-size:11px;color:#0a0a0a;font-style:italic;letter-spacing:0.300px">X</div>
<div class="t" style="left:549.00px;top:711.29px;font-size:11px;color:#0a0a0a;font-style:italic;letter-spacing:0.600px">integer(10)</div>
<div class="t" style="left:798.33px;top:646.19px;font-size:11px;color:#0a0a0a;letter-spacing:0.450px">City</div>
<div class="t" style="left:728.90px;top:663.19px;font-size:11px;color:#0a0a0a;font-weight:bold;letter-spacing:0.300px">ID</div>
<div class="t" style="left:809.00px;top:663.19px;font-size:11px;color:#0a0a0a;font-weight:bold;letter-spacing:0.600px">integer(10)</div>
<div class="t" style="left:728.90px;top:681.19px;font-size:11px;color:#0a0a0a;font-style:italic;letter-spacing:0.300px">CountryID</div>
<div class="t" style="left:809.00px;top:681.19px;font-size:11px;color:#0a0a0a;font-style:italic;letter-spacing:0.600px">integer(10)</div>
<div class="t" style="left:728.90px;top:699.19px;font-size:11px;color:#0a0a0a;letter-spacing:0.300px">Last_Update</div>
<div class="t" style="left:809.00px;top:699.19px;font-size:11px;color:#0a0a0a;letter-spacing:0.600px">timestamp</div>
<svg class="a" style="left:444px;top:201px" width="10" height="17" viewBox="0 0 10 17"><path d="M3.6 7.2 L3.6 14.6 Q3.6 16 5 16.3 Q6.4 16 6.4 14.6 L6.4 7.2 Z" fill="#ecc420" stroke="#b08a10" stroke-width="0.9"/><circle cx="5" cy="4.2" r="3.7" fill="#f0cc28" stroke="#b08a10" stroke-width="0.9"/><ellipse cx="5" cy="3.6" rx="1.4" ry="0.9" fill="#fff8d0"/></svg><svg class="a" style="left:440px;top:219px" width="18" height="18" viewBox="0 0 18 18"><path d="M0.8 4.3 L5.8 0.3 V2.5 C10 2.2 13.4 3.8 15 7.8 L12.4 8.2 C11.4 6.4 9.4 5.7 5.8 6 V8.3 Z" fill="#25903a"/><rect x="8.5" y="7.5" width="8" height="10" fill="#fdfeff" stroke="#5a6068"/><rect x="8.5" y="7.5" width="8" height="2.5" fill="#8cc0f0" stroke="#2d5f98" stroke-width="0.8"/><rect x="11.5" y="11.5" width="2" height="2" fill="#34506e"/><rect x="11.5" y="14.5" width="2" height="2" fill="#34506e"/></svg><svg class="a" style="left:443px;top:238px" width="12" height="16" viewBox="0 0 12 16"><rect x="0.5" y="0.5" width="11" height="15" fill="#fdfeff" stroke="#263040"/><rect x="1" y="1" width="10" height="3" fill="#6aa6e8"/><rect x="1" y="4" width="10" height="1" fill="#2f66a8"/><rect x="4" y="6" width="4" height="1" fill="#203850"/><rect x="4" y="8" width="4" height="1" fill="#203850"/><rect x="4" y="10" width="4" height="1" fill="#203850"/><rect x="4" y="12" width="4" height="2" rx="0.8" fill="#183048"/></svg><svg class="a" style="left:615px;top:238px" width="13" height="15" viewBox="0 0 13 15"><path d="M1.6 13.4 V1.6 H4.7 L8.9 8.4 V1.6 H11.8 V13.4 H8.7 L4.5 6.6 V13.4 Z" fill="#fff" stroke="#2a2218" stroke-width="1.2" stroke-linejoin="round"/></svg><svg class="a" style="left:154px;top:282px" width="10" height="17" viewBox="0 0 10 17"><path d="M3.6 7.2 L3.6 14.6 Q3.6 16 5 16.3 Q6.4 16 6.4 14.6 L6.4 7.2 Z" fill="#ecc420" stroke="#b08a10" stroke-width="0.9"/><circle cx="5" cy="4.2" r="3.7" fill="#f0cc28" stroke="#b08a10" stroke-width="0.9"/><ellipse cx="5" cy="3.6" rx="1.4" ry="0.9" fill="#fff8d0"/></svg><svg class="a" style="left:153px;top:301px" width="12" height="16" viewBox="0 0 12 16"><rect x="0.5" y="0.5" width="11" height="15" fill="#fdfeff" stroke="#263040"/><rect x="1" y="1" width="10" height="3" fill="#6aa6e8"/><rect x="1" y="4" width="10" height="1" fill="#2f66a8"/><rect x="4" y="6" width="4" height="1" fill="#203850"/><rect x="4" y="8" width="4" height="1" fill="#203850"/><rect x="4" y="10" width="4" height="1" fill="#203850"/><rect x="4" y="12" width="4" height="2" rx="0.8" fill="#183048"/></svg><svg class="a" style="left:328px;top:301px" width="13" height="15" viewBox="0 0 13 15"><path d="M1.6 13.4 V1.6 H4.7 L8.9 8.4 V1.6 H11.8 V13.4 H8.7 L4.5 6.6 V13.4 Z" fill="#fff" stroke="#2a2218" stroke-width="1.2" stroke-linejoin="round"/></svg><svg class="a" style="left:153px;top:319px" width="12" height="16" viewBox="0 0 12 16"><rect x="0.5" y="0.5" width="11" height="15" fill="#fdfeff" stroke="#263040"/><rect x="1" y="1" width="10" height="3" fill="#6aa6e8"/><rect x="1" y="4" width="10" height="1" fill="#2f66a8"/><rect x="4" y="6" width="4" height="1" fill="#203850"/><rect x="4" y="8" width="4" height="1" fill="#203850"/><rect x="4" y="10" width="4" height="1" fill="#203850"/><rect x="4" y="12" width="4" height="2" rx="0.8" fill="#183048"/></svg><svg class="a" style="left:328px;top:319px" width="13" height="15" viewBox="0 0 13 15"><path d="M1.6 13.4 V1.6 H4.7 L8.9 8.4 V1.6 H11.8 V13.4 H8.7 L4.5 6.6 V13.4 Z" fill="#fff" stroke="#2a2218" stroke-width="1.2" stroke-linejoin="round"/></svg><svg class="a" style="left:713px;top:198px" width="10" height="17" viewBox="0 0 10 17"><path d="M3.6 7.2 L3.6 14.6 Q3.6 16 5 16.3 Q6.4 16 6.4 14.6 L6.4 7.2 Z" fill="#ecc420" stroke="#b08a10" stroke-width="0.9"/><circle cx="5" cy="4.2" r="3.7" fill="#f0cc28" stroke="#b08a10" stroke-width="0.9"/><ellipse cx="5" cy="3.6" rx="1.4" ry="0.9" fill="#fff8d0"/></svg><svg class="a" style="left:709px;top:216px" width="18" height="18" viewBox="0 0 18 18"><path d="M0.8 4.3 L5.8 0.3 V2.5 C10 2.2 13.4 3.8 15 7.8 L12.4 8.2 C11.4 6.4 9.4 5.7 5.8 6 V8.3 Z" fill="#25903a"/><rect x="8.5" y="7.5" width="8" height="10" fill="#fdfeff" stroke="#5a6068"/><rect x="8.5" y="7.5" width="8" height="2.5" fill="#8cc0f0" stroke="#2d5f98" stroke-width="0.8"/><rect x="11.5" y="11.5" width="2" height="2" fill="#34506e"/><rect x="11.5" y="14.5" width="2" height="2" fill="#34506e"/></svg><svg class="a" style="left:712px;top:235px" width="12" height="16" viewBox="0 0 12 16"><rect x="0.5" y="0.5" width="11" height="15" fill="#fdfeff" stroke="#263040"/><rect x="1" y="1" width="10" height="3" fill="#6aa6e8"/><rect x="1" y="4" width="10" height="1" fill="#2f66a8"/><rect x="4" y="6" width="4" height="1" fill="#203850"/><rect x="4" y="8" width="4" height="1" fill="#203850"/><rect x="4" y="10" width="4" height="1" fill="#203850"/><rect x="4" y="12" width="4" height="2" rx="0.8" fill="#183048"/></svg><svg class="a" style="left:712px;top:253px" width="12" height="16" viewBox="0 0 12 16"><rect x="0.5" y="0.5" width="11" height="15" fill="#fdfeff" stroke="#263040"/><rect x="1" y="1" width="10" height="3" fill="#6aa6e8"/><rect x="1" y="4" width="10" height="1" fill="#2f66a8"/><rect x="4" y="6" width="4" height="1" fill="#203850"/><rect x="4" y="8" width="4" height="1" fill="#203850"/><rect x="4" y="10" width="4" height="1" fill="#203850"/><rect x="4" y="12" width="4" height="2" rx="0.8" fill="#183048"/></svg><svg class="a" style="left:712px;top:271px" width="12" height="16" viewBox="0 0 12 16"><rect x="0.5" y="0.5" width="11" height="15" fill="#fdfeff" stroke="#263040"/><rect x="1" y="1" width="10" height="3" fill="#6aa6e8"/><rect x="1" y="4" width="10" height="1" fill="#2f66a8"/><rect x="4" y="6" width="4" height="1" fill="#203850"/><rect x="4" y="8" width="4" height="1" fill="#203850"/><rect x="4" y="10" width="4" height="1" fill="#203850"/><rect x="4" y="12" width="4" height="2" rx="0.8" fill="#183048"/></svg><svg class="a" style="left:712px;top:289px" width="12" height="16" viewBox="0 0 12 16"><rect x="0.5" y="0.5" width="11" height="15" fill="#fdfeff" stroke="#263040"/><rect x="1" y="1" width="10" height="3" fill="#6aa6e8"/><rect x="1" y="4" width="10" height="1" fill="#2f66a8"/><rect x="4" y="6" width="4" height="1" fill="#203850"/><rect x="4" y="8" width="4" height="1" fill="#203850"/><rect x="4" y="10" width="4" height="1" fill="#203850"/><rect x="4" y="12" width="4" height="2" rx="0.8" fill="#183048"/></svg><svg class="a" style="left:712px;top:307px" width="12" height="16" viewBox="0 0 12 16"><rect x="0.5" y="0.5" width="11" height="15" fill="#fdfeff" stroke="#263040"/><rect x="1" y="1" width="10" height="3" fill="#6aa6e8"/><rect x="1" y="4" width="10" height="1" fill="#2f66a8"/><rect x="4" y="6" width="4" height="1" fill="#203850"/><rect x="4" y="8" width="4" height="1" fill="#203850"/><rect x="4" y="10" width="4" height="1" fill="#203850"/><rect x="4" y="12" width="4" height="2" rx="0.8" fill="#183048"/></svg><svg class="a" style="left:712px;top:325px" width="12" height="16" viewBox="0 0 12 16"><rect x="0.5" y="0.5" width="11" height="15" fill="#fdfeff" stroke="#263040"/><rect x="1" y="1" width="10" height="3" fill="#6aa6e8"/><rect x="1" y="4" width="10" height="1" fill="#2f66a8"/><rect x="4" y="6" width="4" height="1" fill="#203850"/><rect x="4" y="8" width="4" height="1" fill="#203850"/><rect x="4" y="10" width="4" height="1" fill="#203850"/><rect x="4" y="12" width="4" height="2" rx="0.8" fill="#183048"/></svg><svg class="a" style="left:712px;top:343px" width="12" height="16" viewBox="0 0 12 16"><rect x="0.5" y="0.5" width="11" height="15" fill="#fdfeff" stroke="#263040"/><rect x="1" y="1" width="10" height="3" fill="#6aa6e8"/><rect x="1" y="4" width="10" height="1" fill="#2f66a8"/><rect x="4" y="6" width="4" height="1" fill="#203850"/><rect x="4" y="8" width="4" height="1" fill="#203850"/><rect x="4" y="10" width="4" height="1" fill="#203850"/><rect x="4" y="12" width="4" height="2" rx="0.8" fill="#183048"/></svg><svg class="a" style="left:1006px;top:270px" width="18" height="18" viewBox="0 0 18 18"><path d="M0.8 4.3 L5.8 0.3 V2.5 C10 2.2 13.4 3.8 15 7.8 L12.4 8.2 C11.4 6.4 9.4 5.7 5.8 6 V8.3 Z" fill="#25903a"/><rect x="8.5" y="7.5" width="8" height="10" fill="#fdfeff" stroke="#5a6068"/><rect x="8.5" y="7.5" width="8" height="2.5" fill="#8cc0f0" stroke="#2d5f98" stroke-width="0.8"/><rect x="11.5" y="11.5" width="2" height="2" fill="#34506e"/><rect x="11.5" y="14.5" width="2" height="2" fill="#34506e"/></svg><svg class="a" style="left:1010px;top:288px" width="10" height="17" viewBox="0 0 10 17"><path d="M3.6 7.2 L3.6 14.6 Q3.6 16 5 16.3 Q6.4 16 6.4 14.6 L6.4 7.2 Z" fill="#ecc420" stroke="#b08a10" stroke-width="0.9"/><circle cx="5" cy="4.2" r="3.7" fill="#f0cc28" stroke="#b08a10" stroke-width="0.9"/><ellipse cx="5" cy="3.6" rx="1.4" ry="0.9" fill="#fff8d0"/></svg><svg class="a" style="left:1009px;top:307px" width="12" height="16" viewBox="0 0 12 16"><rect x="0.5" y="0.5" width="11" height="15" fill="#fdfeff" stroke="#263040"/><rect x="1" y="1" width="10" height="3" fill="#6aa6e8"/><rect x="1" y="4" width="10" height="1" fill="#2f66a8"/><rect x="4" y="6" width="4" height="1" fill="#203850"/><rect x="4" y="8" width="4" height="1" fill="#203850"/><rect x="4" y="10" width="4" height="1" fill="#203850"/><rect x="4" y="12" width="4" height="2" rx="0.8" fill="#183048"/></svg><svg class="a" style="left:1182px;top:307px" width="13" height="15" viewBox="0 0 13 15"><path d="M1.6 13.4 V1.6 H4.7 L8.9 8.4 V1.6 H11.8 V13.4 H8.7 L4.5 6.6 V13.4 Z" fill="#fff" stroke="#2a2218" stroke-width="1.2" stroke-linejoin="round"/></svg><svg class="a" style="left:1009px;top:325px" width="12" height="16" viewBox="0 0 12 16"><rect x="0.5" y="0.5" width="11" height="15" fill="#fdfeff" stroke="#263040"/><rect x="1" y="1" width="10" height="3" fill="#6aa6e8"/><rect x="1" y="4" width="10" height="1" fill="#2f66a8"/><rect x="4" y="6" width="4" height="1" fill="#203850"/><rect x="4" y="8" width="4" height="1" fill="#203850"/><rect x="4" y="10" width="4" height="1" fill="#203850"/><rect x="4" y="12" width="4" height="2" rx="0.8" fill="#183048"/></svg><svg class="a" style="left:1182px;top:325px" width="13" height="15" viewBox="0 0 13 15"><path d="M1.6 13.4 V1.6 H4.7 L8.9 8.4 V1.6 H11.8 V13.4 H8.7 L4.5 6.6 V13.4 Z" fill="#fff" stroke="#2a2218" stroke-width="1.2" stroke-linejoin="round"/></svg><svg class="a" style="left:444px;top:325px" width="10" height="17" viewBox="0 0 10 17"><path d="M3.6 7.2 L3.6 14.6 Q3.6 16 5 16.3 Q6.4 16 6.4 14.6 L6.4 7.2 Z" fill="#ecc420" stroke="#b08a10" stroke-width="0.9"/><circle cx="5" cy="4.2" r="3.7" fill="#f0cc28" stroke="#b08a10" stroke-width="0.9"/><ellipse cx="5" cy="3.6" rx="1.4" ry="0.9" fill="#fff8d0"/></svg><svg class="a" style="left:440px;top:342px" width="18" height="18" viewBox="0 0 18 18"><path d="M0.8 4.3 L5.8 0.3 V2.5 C10 2.2 13.4 3.8 15 7.8 L12.4 8.2 C11.4 6.4 9.4 5.7 5.8 6 V8.3 Z" fill="#25903a"/><rect x="8.5" y="7.5" width="8" height="10" fill="#fdfeff" stroke="#5a6068"/><rect x="8.5" y="7.5" width="8" height="2.5" fill="#8cc0f0" stroke="#2d5f98" stroke-width="0.8"/><rect x="11.5" y="11.5" width="2" height="2" fill="#34506e"/><rect x="11.5" y="14.5" width="2" height="2" fill="#34506e"/></svg><svg class="a" style="left:440px;top:360px" width="18" height="18" viewBox="0 0 18 18"><path d="M0.8 4.3 L5.8 0.3 V2.5 C10 2.2 13.4 3.8 15 7.8 L12.4 8.2 C11.4 6.4 9.4 5.7 5.8 6 V8.3 Z" fill="#25903a"/><rect x="8.5" y="7.5" width="8" height="10" fill="#fdfeff" stroke="#5a6068"/><rect x="8.5" y="7.5" width="8" height="2.5" fill="#8cc0f0" stroke="#2d5f98" stroke-width="0.8"/><rect x="11.5" y="11.5" width="2" height="2" fill="#34506e"/><rect x="11.5" y="14.5" width="2" height="2" fill="#34506e"/></svg><svg class="a" style="left:440px;top:378px" width="18" height="18" viewBox="0 0 18 18"><path d="M0.8 4.3 L5.8 0.3 V2.5 C10 2.2 13.4 3.8 15 7.8 L12.4 8.2 C11.4 6.4 9.4 5.7 5.8 6 V8.3 Z" fill="#25903a"/><rect x="8.5" y="7.5" width="8" height="10" fill="#fdfeff" stroke="#5a6068"/><rect x="8.5" y="7.5" width="8" height="2.5" fill="#8cc0f0" stroke="#2d5f98" stroke-width="0.8"/><rect x="11.5" y="11.5" width="2" height="2" fill="#34506e"/><rect x="11.5" y="14.5" width="2" height="2" fill="#34506e"/></svg><svg class="a" style="left:443px;top:397px" width="12" height="16" viewBox="0 0 12 16"><rect x="0.5" y="0.5" width="11" height="15" fill="#fdfeff" stroke="#263040"/><rect x="1" y="1" width="10" height="3" fill="#6aa6e8"/><rect x="1" y="4" width="10" height="1" fill="#2f66a8"/><rect x="4" y="6" width="4" height="1" fill="#203850"/><rect x="4" y="8" width="4" height="1" fill="#203850"/><rect x="4" y="10" width="4" height="1" fill="#203850"/><rect x="4" y="12" width="4" height="2" rx="0.8" fill="#183048"/></svg><svg class="a" style="left:615px;top:397px" width="13" height="15" viewBox="0 0 13 15"><path d="M1.6 13.4 V1.6 H4.7 L8.9 8.4 V1.6 H11.8 V13.4 H8.7 L4.5 6.6 V13.4 Z" fill="#fff" stroke="#2a2218" stroke-width="1.2" stroke-linejoin="round"/></svg><svg class="a" style="left:443px;top:415px" width="12" height="16" viewBox="0 0 12 16"><rect x="0.5" y="0.5" width="11" height="15" fill="#fdfeff" stroke="#263040"/><rect x="1" y="1" width="10" height="3" fill="#6aa6e8"/><rect x="1" y="4" width="10" height="1" fill="#2f66a8"/><rect x="4" y="6" width="4" height="1" fill="#203850"/><rect x="4" y="8" width="4" height="1" fill="#203850"/><rect x="4" y="10" width="4" height="1" fill="#203850"/><rect x="4" y="12" width="4" height="2" rx="0.8" fill="#183048"/></svg><svg class="a" style="left:615px;top:415px" width="13" height="15" viewBox="0 0 13 15"><path d="M1.6 13.4 V1.6 H4.7 L8.9 8.4 V1.6 H11.8 V13.4 H8.7 L4.5 6.6 V13.4 Z" fill="#fff" stroke="#2a2218" stroke-width="1.2" stroke-linejoin="round"/></svg><svg class="a" style="left:443px;top:433px" width="12" height="16" viewBox="0 0 12 16"><rect x="0.5" y="0.5" width="11" height="15" fill="#fdfeff" stroke="#263040"/><rect x="1" y="1" width="10" height="3" fill="#6aa6e8"/><rect x="1" y="4" width="10" height="1" fill="#2f66a8"/><rect x="4" y="6" width="4" height="1" fill="#203850"/><rect x="4" y="8" width="4" height="1" fill="#203850"/><rect x="4" y="10" width="4" height="1" fill="#203850"/><rect x="4" y="12" width="4" height="2" rx="0.8" fill="#183048"/></svg><svg class="a" style="left:615px;top:433px" width="13" height="15" viewBox="0 0 13 15"><path d="M1.6 13.4 V1.6 H4.7 L8.9 8.4 V1.6 H11.8 V13.4 H8.7 L4.5 6.6 V13.4 Z" fill="#fff" stroke="#2a2218" stroke-width="1.2" stroke-linejoin="round"/></svg><svg class="a" style="left:152px;top:412px" width="18" height="18" viewBox="0 0 18 18"><path d="M0.8 4.3 L5.8 0.3 V2.5 C10 2.2 13.4 3.8 15 7.8 L12.4 8.2 C11.4 6.4 9.4 5.7 5.8 6 V8.3 Z" fill="#25903a"/><rect x="8.5" y="7.5" width="8" height="10" fill="#fdfeff" stroke="#5a6068"/><rect x="8.5" y="7.5" width="8" height="2.5" fill="#8cc0f0" stroke="#2d5f98" stroke-width="0.8"/><rect x="11.5" y="11.5" width="2" height="2" fill="#34506e"/><rect x="11.5" y="14.5" width="2" height="2" fill="#34506e"/></svg><svg class="a" style="left:152px;top:430px" width="18" height="18" viewBox="0 0 18 18"><path d="M0.8 4.3 L5.8 0.3 V2.5 C10 2.2 13.4 3.8 15 7.8 L12.4 8.2 C11.4 6.4 9.4 5.7 5.8 6 V8.3 Z" fill="#25903a"/><rect x="8.5" y="7.5" width="8" height="10" fill="#fdfeff" stroke="#5a6068"/><rect x="8.5" y="7.5" width="8" height="2.5" fill="#8cc0f0" stroke="#2d5f98" stroke-width="0.8"/><rect x="11.5" y="11.5" width="2" height="2" fill="#34506e"/><rect x="11.5" y="14.5" width="2" height="2" fill="#34506e"/></svg><svg class="a" style="left:155px;top:449px" width="12" height="16" viewBox="0 0 12 16"><rect x="0.5" y="0.5" width="11" height="15" fill="#fdfeff" stroke="#263040"/><rect x="1" y="1" width="10" height="3" fill="#6aa6e8"/><rect x="1" y="4" width="10" height="1" fill="#2f66a8"/><rect x="4" y="6" width="4" height="1" fill="#203850"/><rect x="4" y="8" width="4" height="1" fill="#203850"/><rect x="4" y="10" width="4" height="1" fill="#203850"/><rect x="4" y="12" width="4" height="2" rx="0.8" fill="#183048"/></svg><svg class="a" style="left:325px;top:449px" width="13" height="15" viewBox="0 0 13 15"><path d="M1.6 13.4 V1.6 H4.7 L8.9 8.4 V1.6 H11.8 V13.4 H8.7 L4.5 6.6 V13.4 Z" fill="#fff" stroke="#2a2218" stroke-width="1.2" stroke-linejoin="round"/></svg><svg class="a" style="left:153px;top:542px" width="10" height="17" viewBox="0 0 10 17"><path d="M3.6 7.2 L3.6 14.6 Q3.6 16 5 16.3 Q6.4 16 6.4 14.6 L6.4 7.2 Z" fill="#ecc420" stroke="#b08a10" stroke-width="0.9"/><circle cx="5" cy="4.2" r="3.7" fill="#f0cc28" stroke="#b08a10" stroke-width="0.9"/><ellipse cx="5" cy="3.6" rx="1.4" ry="0.9" fill="#fff8d0"/></svg><svg class="a" style="left:150px;top:560px" width="18" height="18" viewBox="0 0 18 18"><path d="M0.8 4.3 L5.8 0.3 V2.5 C10 2.2 13.4 3.8 15 7.8 L12.4 8.2 C11.4 6.4 9.4 5.7 5.8 6 V8.3 Z" fill="#25903a"/><rect x="8.5" y="7.5" width="8" height="10" fill="#fdfeff" stroke="#5a6068"/><rect x="8.5" y="7.5" width="8" height="2.5" fill="#8cc0f0" stroke="#2d5f98" stroke-width="0.8"/><rect x="11.5" y="11.5" width="2" height="2" fill="#34506e"/><rect x="11.5" y="14.5" width="2" height="2" fill="#34506e"/></svg><svg class="a" style="left:153px;top:579px" width="12" height="16" viewBox="0 0 12 16"><rect x="0.5" y="0.5" width="11" height="15" fill="#fdfeff" stroke="#263040"/><rect x="1" y="1" width="10" height="3" fill="#6aa6e8"/><rect x="1" y="4" width="10" height="1" fill="#2f66a8"/><rect x="4" y="6" width="4" height="1" fill="#203850"/><rect x="4" y="8" width="4" height="1" fill="#203850"/><rect x="4" y="10" width="4" height="1" fill="#203850"/><rect x="4" y="12" width="4" height="2" rx="0.8" fill="#183048"/></svg><div class="a" style="left:367px;top:578px;width:12px;height:16px;overflow:hidden"><svg class="a" style="position:absolute;left:10px;top:1px" width="13" height="15" viewBox="0 0 13 15"><path d="M1.6 13.4 V1.6 H4.7 L8.9 8.4 V1.6 H11.8 V13.4 H8.7 L4.5 6.6 V13.4 Z" fill="#fff" stroke="#2a2218" stroke-width="1.2" stroke-linejoin="round"/></svg></div><svg class="a" style="left:153px;top:597px" width="12" height="16" viewBox="0 0 12 16"><rect x="0.5" y="0.5" width="11" height="15" fill="#fdfeff" stroke="#263040"/><rect x="1" y="1" width="10" height="3" fill="#6aa6e8"/><rect x="1" y="4" width="10" height="1" fill="#2f66a8"/><rect x="4" y="6" width="4" height="1" fill="#203850"/><rect x="4" y="8" width="4" height="1" fill="#203850"/><rect x="4" y="10" width="4" height="1" fill="#203850"/><rect x="4" y="12" width="4" height="2" rx="0.8" fill="#183048"/></svg><div class="a" style="left:367px;top:596px;width:12px;height:16px;overflow:hidden"><svg class="a" style="position:absolute;left:10px;top:1px" width="13" height="15" viewBox="0 0 13 15"><path d="M1.6 13.4 V1.6 H4.7 L8.9 8.4 V1.6 H11.8 V13.4 H8.7 L4.5 6.6 V13.4 Z" fill="#fff" stroke="#2a2218" stroke-width="1.2" stroke-linejoin="round"/></svg></div><svg class="a" style="left:153px;top:615px" width="12" height="16" viewBox="0 0 12 16"><rect x="0.5" y="0.5" width="11" height="15" fill="#fdfeff" stroke="#263040"/><rect x="1" y="1" width="10" height="3" fill="#6aa6e8"/><rect x="1" y="4" width="10" height="1" fill="#2f66a8"/><rect x="4" y="6" width="4" height="1" fill="#203850"/><rect x="4" y="8" width="4" height="1" fill="#203850"/><rect x="4" y="10" width="4" height="1" fill="#203850"/><rect x="4" y="12" width="4" height="2" rx="0.8" fill="#183048"/></svg><div class="a" style="left:367px;top:614px;width:12px;height:16px;overflow:hidden"><svg class="a" style="position:absolute;left:10px;top:1px" width="13" height="15" viewBox="0 0 13 15"><path d="M1.6 13.4 V1.6 H4.7 L8.9 8.4 V1.6 H11.8 V13.4 H8.7 L4.5 6.6 V13.4 Z" fill="#fff" stroke="#2a2218" stroke-width="1.2" stroke-linejoin="round"/></svg></div><svg class="a" style="left:153px;top:633px" width="12" height="16" viewBox="0 0 12 16"><rect x="0.5" y="0.5" width="11" height="15" fill="#fdfeff" stroke="#263040"/><rect x="1" y="1" width="10" height="3" fill="#6aa6e8"/><rect x="1" y="4" width="10" height="1" fill="#2f66a8"/><rect x="4" y="6" width="4" height="1" fill="#203850"/><rect x="4" y="8" width="4" height="1" fill="#203850"/><rect x="4" y="10" width="4" height="1" fill="#203850"/><rect x="4" y="12" width="4" height="2" rx="0.8" fill="#183048"/></svg><div class="a" style="left:367px;top:632px;width:12px;height:16px;overflow:hidden"><svg class="a" style="position:absolute;left:10px;top:1px" width="13" height="15" viewBox="0 0 13 15"><path d="M1.6 13.4 V1.6 H4.7 L8.9 8.4 V1.6 H11.8 V13.4 H8.7 L4.5 6.6 V13.4 Z" fill="#fff" stroke="#2a2218" stroke-width="1.2" stroke-linejoin="round"/></svg></div><svg class="a" style="left:153px;top:651px" width="12" height="16" viewBox="0 0 12 16"><rect x="0.5" y="0.5" width="11" height="15" fill="#fdfeff" stroke="#263040"/><rect x="1" y="1" width="10" height="3" fill="#6aa6e8"/><rect x="1" y="4" width="10" height="1" fill="#2f66a8"/><rect x="4" y="6" width="4" height="1" fill="#203850"/><rect x="4" y="8" width="4" height="1" fill="#203850"/><rect x="4" y="10" width="4" height="1" fill="#203850"/><rect x="4" y="12" width="4" height="2" rx="0.8" fill="#183048"/></svg><div class="a" style="left:367px;top:650px;width:12px;height:16px;overflow:hidden"><svg class="a" style="position:absolute;left:10px;top:1px" width="13" height="15" viewBox="0 0 13 15"><path d="M1.6 13.4 V1.6 H4.7 L8.9 8.4 V1.6 H11.8 V13.4 H8.7 L4.5 6.6 V13.4 Z" fill="#fff" stroke="#2a2218" stroke-width="1.2" stroke-linejoin="round"/></svg></div><svg class="a" style="left:153px;top:669px" width="12" height="16" viewBox="0 0 12 16"><rect x="0.5" y="0.5" width="11" height="15" fill="#fdfeff" stroke="#263040"/><rect x="1" y="1" width="10" height="3" fill="#6aa6e8"/><rect x="1" y="4" width="10" height="1" fill="#2f66a8"/><rect x="4" y="6" width="4" height="1" fill="#203850"/><rect x="4" y="8" width="4" height="1" fill="#203850"/><rect x="4" y="10" width="4" height="1" fill="#203850"/><rect x="4" y="12" width="4" height="2" rx="0.8" fill="#183048"/></svg><div class="a" style="left:367px;top:668px;width:12px;height:16px;overflow:hidden"><svg class="a" style="position:absolute;left:10px;top:1px" width="13" height="15" viewBox="0 0 13 15"><path d="M1.6 13.4 V1.6 H4.7 L8.9 8.4 V1.6 H11.8 V13.4 H8.7 L4.5 6.6 V13.4 Z" fill="#fff" stroke="#2a2218" stroke-width="1.2" stroke-linejoin="round"/></svg></div><svg class="a" style="left:153px;top:687px" width="12" height="16" viewBox="0 0 12 16"><rect x="0.5" y="0.5" width="11" height="15" fill="#fdfeff" stroke="#263040"/><rect x="1" y="1" width="10" height="3" fill="#6aa6e8"/><rect x="1" y="4" width="10" height="1" fill="#2f66a8"/><rect x="4" y="6" width="4" height="1" fill="#203850"/><rect x="4" y="8" width="4" height="1" fill="#203850"/><rect x="4" y="10" width="4" height="1" fill="#203850"/><rect x="4" y="12" width="4" height="2" rx="0.8" fill="#183048"/></svg><div class="a" style="left:367px;top:686px;width:12px;height:16px;overflow:hidden"><svg class="a" style="position:absolute;left:10px;top:1px" width="13" height="15" viewBox="0 0 13 15"><path d="M1.6 13.4 V1.6 H4.7 L8.9 8.4 V1.6 H11.8 V13.4 H8.7 L4.5 6.6 V13.4 Z" fill="#fff" stroke="#2a2218" stroke-width="1.2" stroke-linejoin="round"/></svg></div><svg class="a" style="left:443px;top:515px" width="10" height="17" viewBox="0 0 10 17"><path d="M3.6 7.2 L3.6 14.6 Q3.6 16 5 16.3 Q6.4 16 6.4 14.6 L6.4 7.2 Z" fill="#ecc420" stroke="#b08a10" stroke-width="0.9"/><circle cx="5" cy="4.2" r="3.7" fill="#f0cc28" stroke="#b08a10" stroke-width="0.9"/><ellipse cx="5" cy="3.6" rx="1.4" ry="0.9" fill="#fff8d0"/></svg><svg class="a" style="left:440px;top:533px" width="18" height="18" viewBox="0 0 18 18"><path d="M0.8 4.3 L5.8 0.3 V2.5 C10 2.2 13.4 3.8 15 7.8 L12.4 8.2 C11.4 6.4 9.4 5.7 5.8 6 V8.3 Z" fill="#25903a"/><rect x="8.5" y="7.5" width="8" height="10" fill="#fdfeff" stroke="#5a6068"/><rect x="8.5" y="7.5" width="8" height="2.5" fill="#8cc0f0" stroke="#2d5f98" stroke-width="0.8"/><rect x="11.5" y="11.5" width="2" height="2" fill="#34506e"/><rect x="11.5" y="14.5" width="2" height="2" fill="#34506e"/></svg><svg class="a" style="left:440px;top:551px" width="18" height="18" viewBox="0 0 18 18"><path d="M0.8 4.3 L5.8 0.3 V2.5 C10 2.2 13.4 3.8 15 7.8 L12.4 8.2 C11.4 6.4 9.4 5.7 5.8 6 V8.3 Z" fill="#25903a"/><rect x="8.5" y="7.5" width="8" height="10" fill="#fdfeff" stroke="#5a6068"/><rect x="8.5" y="7.5" width="8" height="2.5" fill="#8cc0f0" stroke="#2d5f98" stroke-width="0.8"/><rect x="11.5" y="11.5" width="2" height="2" fill="#34506e"/><rect x="11.5" y="14.5" width="2" height="2" fill="#34506e"/></svg><svg class="a" style="left:440px;top:569px" width="18" height="18" viewBox="0 0 18 18"><path d="M0.8 4.3 L5.8 0.3 V2.5 C10 2.2 13.4 3.8 15 7.8 L12.4 8.2 C11.4 6.4 9.4 5.7 5.8 6 V8.3 Z" fill="#25903a"/><rect x="8.5" y="7.5" width="8" height="10" fill="#fdfeff" stroke="#5a6068"/><rect x="8.5" y="7.5" width="8" height="2.5" fill="#8cc0f0" stroke="#2d5f98" stroke-width="0.8"/><rect x="11.5" y="11.5" width="2" height="2" fill="#34506e"/><rect x="11.5" y="14.5" width="2" height="2" fill="#34506e"/></svg><svg class="a" style="left:443px;top:588px" width="12" height="16" viewBox="0 0 12 16"><rect x="0.5" y="0.5" width="11" height="15" fill="#fdfeff" stroke="#263040"/><rect x="1" y="1" width="10" height="3" fill="#6aa6e8"/><rect x="1" y="4" width="10" height="1" fill="#2f66a8"/><rect x="4" y="6" width="4" height="1" fill="#203850"/><rect x="4" y="8" width="4" height="1" fill="#203850"/><rect x="4" y="10" width="4" height="1" fill="#203850"/><rect x="4" y="12" width="4" height="2" rx="0.8" fill="#183048"/></svg><div class="a" style="left:636px;top:587px;width:12px;height:16px;overflow:hidden"><svg class="a" style="position:absolute;left:6px;top:1px" width="13" height="15" viewBox="0 0 13 15"><path d="M1.6 13.4 V1.6 H4.7 L8.9 8.4 V1.6 H11.8 V13.4 H8.7 L4.5 6.6 V13.4 Z" fill="#fff" stroke="#2a2218" stroke-width="1.2" stroke-linejoin="round"/></svg></div><svg class="a" style="left:443px;top:606px" width="12" height="16" viewBox="0 0 12 16"><rect x="0.5" y="0.5" width="11" height="15" fill="#fdfeff" stroke="#263040"/><rect x="1" y="1" width="10" height="3" fill="#6aa6e8"/><rect x="1" y="4" width="10" height="1" fill="#2f66a8"/><rect x="4" y="6" width="4" height="1" fill="#203850"/><rect x="4" y="8" width="4" height="1" fill="#203850"/><rect x="4" y="10" width="4" height="1" fill="#203850"/><rect x="4" y="12" width="4" height="2" rx="0.8" fill="#183048"/></svg><div class="a" style="left:636px;top:605px;width:12px;height:16px;overflow:hidden"><svg class="a" style="position:absolute;left:6px;top:1px" width="13" height="15" viewBox="0 0 13 15"><path d="M1.6 13.4 V1.6 H4.7 L8.9 8.4 V1.6 H11.8 V13.4 H8.7 L4.5 6.6 V13.4 Z" fill="#fff" stroke="#2a2218" stroke-width="1.2" stroke-linejoin="round"/></svg></div><svg class="a" style="left:712px;top:438px" width="10" height="17" viewBox="0 0 10 17"><path d="M3.6 7.2 L3.6 14.6 Q3.6 16 5 16.3 Q6.4 16 6.4 14.6 L6.4 7.2 Z" fill="#ecc420" stroke="#b08a10" stroke-width="0.9"/><circle cx="5" cy="4.2" r="3.7" fill="#f0cc28" stroke="#b08a10" stroke-width="0.9"/><ellipse cx="5" cy="3.6" rx="1.4" ry="0.9" fill="#fff8d0"/></svg><svg class="a" style="left:708px;top:456px" width="18" height="18" viewBox="0 0 18 18"><path d="M0.8 4.3 L5.8 0.3 V2.5 C10 2.2 13.4 3.8 15 7.8 L12.4 8.2 C11.4 6.4 9.4 5.7 5.8 6 V8.3 Z" fill="#25903a"/><rect x="8.5" y="7.5" width="8" height="10" fill="#fdfeff" stroke="#5a6068"/><rect x="8.5" y="7.5" width="8" height="2.5" fill="#8cc0f0" stroke="#2d5f98" stroke-width="0.8"/><rect x="11.5" y="11.5" width="2" height="2" fill="#34506e"/><rect x="11.5" y="14.5" width="2" height="2" fill="#34506e"/></svg><svg class="a" style="left:711px;top:475px" width="12" height="16" viewBox="0 0 12 16"><rect x="0.5" y="0.5" width="11" height="15" fill="#fdfeff" stroke="#263040"/><rect x="1" y="1" width="10" height="3" fill="#6aa6e8"/><rect x="1" y="4" width="10" height="1" fill="#2f66a8"/><rect x="4" y="6" width="4" height="1" fill="#203850"/><rect x="4" y="8" width="4" height="1" fill="#203850"/><rect x="4" y="10" width="4" height="1" fill="#203850"/><rect x="4" y="12" width="4" height="2" rx="0.8" fill="#183048"/></svg><svg class="a" style="left:887px;top:475px" width="13" height="15" viewBox="0 0 13 15"><path d="M1.6 13.4 V1.6 H4.7 L8.9 8.4 V1.6 H11.8 V13.4 H8.7 L4.5 6.6 V13.4 Z" fill="#fff" stroke="#2a2218" stroke-width="1.2" stroke-linejoin="round"/></svg><svg class="a" style="left:711px;top:493px" width="12" height="16" viewBox="0 0 12 16"><rect x="0.5" y="0.5" width="11" height="15" fill="#fdfeff" stroke="#263040"/><rect x="1" y="1" width="10" height="3" fill="#6aa6e8"/><rect x="1" y="4" width="10" height="1" fill="#2f66a8"/><rect x="4" y="6" width="4" height="1" fill="#203850"/><rect x="4" y="8" width="4" height="1" fill="#203850"/><rect x="4" y="10" width="4" height="1" fill="#203850"/><rect x="4" y="12" width="4" height="2" rx="0.8" fill="#183048"/></svg><svg class="a" style="left:887px;top:493px" width="13" height="15" viewBox="0 0 13 15"><path d="M1.6 13.4 V1.6 H4.7 L8.9 8.4 V1.6 H11.8 V13.4 H8.7 L4.5 6.6 V13.4 Z" fill="#fff" stroke="#2a2218" stroke-width="1.2" stroke-linejoin="round"/></svg><svg class="a" style="left:711px;top:511px" width="12" height="16" viewBox="0 0 12 16"><rect x="0.5" y="0.5" width="11" height="15" fill="#fdfeff" stroke="#263040"/><rect x="1" y="1" width="10" height="3" fill="#6aa6e8"/><rect x="1" y="4" width="10" height="1" fill="#2f66a8"/><rect x="4" y="6" width="4" height="1" fill="#203850"/><rect x="4" y="8" width="4" height="1" fill="#203850"/><rect x="4" y="10" width="4" height="1" fill="#203850"/><rect x="4" y="12" width="4" height="2" rx="0.8" fill="#183048"/></svg><svg class="a" style="left:887px;top:511px" width="13" height="15" viewBox="0 0 13 15"><path d="M1.6 13.4 V1.6 H4.7 L8.9 8.4 V1.6 H11.8 V13.4 H8.7 L4.5 6.6 V13.4 Z" fill="#fff" stroke="#2a2218" stroke-width="1.2" stroke-linejoin="round"/></svg><svg class="a" style="left:711px;top:529px" width="12" height="16" viewBox="0 0 12 16"><rect x="0.5" y="0.5" width="11" height="15" fill="#fdfeff" stroke="#263040"/><rect x="1" y="1" width="10" height="3" fill="#6aa6e8"/><rect x="1" y="4" width="10" height="1" fill="#2f66a8"/><rect x="4" y="6" width="4" height="1" fill="#203850"/><rect x="4" y="8" width="4" height="1" fill="#203850"/><rect x="4" y="10" width="4" height="1" fill="#203850"/><rect x="4" y="12" width="4" height="2" rx="0.8" fill="#183048"/></svg><svg class="a" style="left:887px;top:529px" width="13" height="15" viewBox="0 0 13 15"><path d="M1.6 13.4 V1.6 H4.7 L8.9 8.4 V1.6 H11.8 V13.4 H8.7 L4.5 6.6 V13.4 Z" fill="#fff" stroke="#2a2218" stroke-width="1.2" stroke-linejoin="round"/></svg><svg class="a" style="left:711px;top:547px" width="12" height="16" viewBox="0 0 12 16"><rect x="0.5" y="0.5" width="11" height="15" fill="#fdfeff" stroke="#263040"/><rect x="1" y="1" width="10" height="3" fill="#6aa6e8"/><rect x="1" y="4" width="10" height="1" fill="#2f66a8"/><rect x="4" y="6" width="4" height="1" fill="#203850"/><rect x="4" y="8" width="4" height="1" fill="#203850"/><rect x="4" y="10" width="4" height="1" fill="#203850"/><rect x="4" y="12" width="4" height="2" rx="0.8" fill="#183048"/></svg><svg class="a" style="left:887px;top:547px" width="13" height="15" viewBox="0 0 13 15"><path d="M1.6 13.4 V1.6 H4.7 L8.9 8.4 V1.6 H11.8 V13.4 H8.7 L4.5 6.6 V13.4 Z" fill="#fff" stroke="#2a2218" stroke-width="1.2" stroke-linejoin="round"/></svg><svg class="a" style="left:711px;top:565px" width="12" height="16" viewBox="0 0 12 16"><rect x="0.5" y="0.5" width="11" height="15" fill="#fdfeff" stroke="#263040"/><rect x="1" y="1" width="10" height="3" fill="#6aa6e8"/><rect x="1" y="4" width="10" height="1" fill="#2f66a8"/><rect x="4" y="6" width="4" height="1" fill="#203850"/><rect x="4" y="8" width="4" height="1" fill="#203850"/><rect x="4" y="10" width="4" height="1" fill="#203850"/><rect x="4" y="12" width="4" height="2" rx="0.8" fill="#183048"/></svg><svg class="a" style="left:887px;top:565px" width="13" height="15" viewBox="0 0 13 15"><path d="M1.6 13.4 V1.6 H4.7 L8.9 8.4 V1.6 H11.8 V13.4 H8.7 L4.5 6.6 V13.4 Z" fill="#fff" stroke="#2a2218" stroke-width="1.2" stroke-linejoin="round"/></svg><svg class="a" style="left:443px;top:691px" width="10" height="17" viewBox="0 0 10 17"><path d="M3.6 7.2 L3.6 14.6 Q3.6 16 5 16.3 Q6.4 16 6.4 14.6 L6.4 7.2 Z" fill="#ecc420" stroke="#b08a10" stroke-width="0.9"/><circle cx="5" cy="4.2" r="3.7" fill="#f0cc28" stroke="#b08a10" stroke-width="0.9"/><ellipse cx="5" cy="3.6" rx="1.4" ry="0.9" fill="#fff8d0"/></svg><svg class="a" style="left:440px;top:708px" width="18" height="18" viewBox="0 0 18 18"><path d="M0.8 4.3 L5.8 0.3 V2.5 C10 2.2 13.4 3.8 15 7.8 L12.4 8.2 C11.4 6.4 9.4 5.7 5.8 6 V8.3 Z" fill="#25903a"/><rect x="8.5" y="7.5" width="8" height="10" fill="#fdfeff" stroke="#5a6068"/><rect x="8.5" y="7.5" width="8" height="2.5" fill="#8cc0f0" stroke="#2d5f98" stroke-width="0.8"/><rect x="11.5" y="11.5" width="2" height="2" fill="#34506e"/><rect x="11.5" y="14.5" width="2" height="2" fill="#34506e"/></svg><svg class="a" style="left:712px;top:660px" width="10" height="17" viewBox="0 0 10 17"><path d="M3.6 7.2 L3.6 14.6 Q3.6 16 5 16.3 Q6.4 16 6.4 14.6 L6.4 7.2 Z" fill="#ecc420" stroke="#b08a10" stroke-width="0.9"/><circle cx="5" cy="4.2" r="3.7" fill="#f0cc28" stroke="#b08a10" stroke-width="0.9"/><ellipse cx="5" cy="3.6" rx="1.4" ry="0.9" fill="#fff8d0"/></svg><svg class="a" style="left:708px;top:678px" width="18" height="18" viewBox="0 0 18 18"><path d="M0.8 4.3 L5.8 0.3 V2.5 C10 2.2 13.4 3.8 15 7.8 L12.4 8.2 C11.4 6.4 9.4 5.7 5.8 6 V8.3 Z" fill="#25903a"/><rect x="8.5" y="7.5" width="8" height="10" fill="#fdfeff" stroke="#5a6068"/><rect x="8.5" y="7.5" width="8" height="2.5" fill="#8cc0f0" stroke="#2d5f98" stroke-width="0.8"/><rect x="11.5" y="11.5" width="2" height="2" fill="#34506e"/><rect x="11.5" y="14.5" width="2" height="2" fill="#34506e"/></svg><svg class="a" style="left:711px;top:697px" width="12" height="16" viewBox="0 0 12 16"><rect x="0.5" y="0.5" width="11" height="15" fill="#fdfeff" stroke="#263040"/><rect x="1" y="1" width="10" height="3" fill="#6aa6e8"/><rect x="1" y="4" width="10" height="1" fill="#2f66a8"/><rect x="4" y="6" width="4" height="1" fill="#203850"/><rect x="4" y="8" width="4" height="1" fill="#203850"/><rect x="4" y="10" width="4" height="1" fill="#203850"/><rect x="4" y="12" width="4" height="2" rx="0.8" fill="#183048"/></svg><svg class="a" style="left:887px;top:697px" width="13" height="15" viewBox="0 0 13 15"><path d="M1.6 13.4 V1.6 H4.7 L8.9 8.4 V1.6 H11.8 V13.4 H8.7 L4.5 6.6 V13.4 Z" fill="#fff" stroke="#2a2218" stroke-width="1.2" stroke-linejoin="round"/></svg><div class="a" style="left:0;top:693px;width:1280px;height:27px;background:linear-gradient(#fbfbfb,#ececec)"></div><div class="a" style="left:60px;top:692px;width:1218px;height:1px;background:#8a8a8a"></div><svg class="a" style="left:1256px;top:160px" width="24" height="540">
<rect x="6" y="0" width="18" height="9.5" fill="#efefef"/>
<rect x="6" y="9.5" width="16" height="502" fill="#f9f9f9"/>
<line x1="6.5" y1="10" x2="6.5" y2="511" stroke="#e4e4e4"/>
<path d="M6 9.5 H20.5 V4.5 H23" fill="none" stroke="#7d7d7d" stroke-width="1"/>
<line x1="22.5" y1="4" x2="22.5" y2="533" stroke="#8a8a8a" stroke-width="1"/>
<rect x="10" y="11" width="8" height="288.5" rx="4" fill="#c2c2c2"/>
</svg><svg class="a" style="left:1248px;top:414px" width="15" height="29">
<rect x="1.5" y="1.5" width="12" height="26" fill="#e8e8e8" stroke="#cfcfcf"/>
<line x1="4.5" y1="4" x2="4.5" y2="25" stroke="#555"/><line x1="7.5" y1="4" x2="7.5" y2="25" stroke="#555"/><line x1="10.5" y1="4" x2="10.5" y2="25" stroke="#555"/>
</svg><svg class="a" style="left:1260px;top:677px" width="17" height="17" viewBox="0 0 17 17">
<path d="M8.5 0.5 L12 4 H10 V7 H13 V5 L16.5 8.5 L13 12 V10 H10 V13 H12 L8.5 16.5 L5 13 H7 V10 H4 V12 L0.5 8.5 L4 5 V7 H7 V4 H5 Z" fill="#000"/>
<rect x="7.2" y="7.2" width="2.6" height="2.6" fill="#fff"/>
</svg><svg class="a" style="left:1208px;top:698px" width="22" height="17">
<rect x="1.5" y="2.5" width="18" height="12" fill="#e8f0f8" stroke="#6a9cc8"/>
<path d="M1.5 2.5 L10.5 10 L19.5 2.5" fill="none" stroke="#6a9cc8"/>
</svg><svg class="a" style="left:1243px;top:695px" width="18" height="22">
<path d="M1.5 1.5 H11 L16.5 7 V20.5 H1.5 Z" fill="#eef3f8" stroke="#6a9cc8"/>
<line x1="4" y1="11" x2="14" y2="11" stroke="#c8c8c8"/><line x1="4" y1="14" x2="14" y2="14" stroke="#c8c8c8"/><line x1="4" y1="17" x2="14" y2="17" stroke="#c8c8c8"/>
<path d="M6 18 L13 5" stroke="#3d8ac8" stroke-width="1.8"/>
</svg><svg class="a" style="left:1078px;top:455px" width="14" height="20" viewBox="0 0 14 20">
<path d="M1.5 1.5 V15.5 L4.8 12.4 L7.2 17.8 L9.4 16.8 L7.1 11.6 L11.6 11.4 Z" fill="#000" stroke="#fff" stroke-width="1"/>
</svg><div class="a" style="left:0;top:135px;width:23px;height:141px;border-radius:0 3px 3px 0;background:linear-gradient(90deg,#e8eaf8 0%,#c4d6f4 40%,#a8c8f0 50%,#8cbcf0 52%,#a0d0f6 80%,#cdeffb 100%);border-right:1px solid #7f858e;border-top:1px solid #9aa0aa;border-bottom:1px solid #9aa0aa"></div><div class="a" style="left:-50.7px;top:193.6px;width:120px;height:14px;line-height:14px;font-size:12px;font-weight:bold;color:#0e1830;text-align:center;white-space:pre;transform:rotate(-90deg);letter-spacing:-0.425px;text-indent:-0.425px">Diagram Navigator</div><div class="a" style="left:0;top:285px;width:23px;height:123px;border-radius:0 3px 3px 0;background:linear-gradient(90deg,#e8eaf8 0%,#c4d6f4 40%,#a8c8f0 50%,#8cbcf0 52%,#a0d0f6 80%,#cdeffb 100%);border-right:1px solid #7f858e;border-top:1px solid #9aa0aa;border-bottom:1px solid #9aa0aa"></div><div class="a" style="left:-50.7px;top:334.3px;width:120px;height:14px;line-height:14px;font-size:12px;font-weight:bold;color:#0e1830;text-align:center;white-space:pre;transform:rotate(-90deg);letter-spacing:-0.438px;text-indent:-0.438px">Model Explorer</div><div class="a" style="left:0;top:416px;width:23px;height:87px;border-radius:0 3px 3px 0;background:linear-gradient(90deg,#e8eaf8 0%,#c4d6f4 40%,#a8c8f0 50%,#8cbcf0 52%,#a0d0f6 80%,#cdeffb 100%);border-right:1px solid #7f858e;border-top:1px solid #9aa0aa;border-bottom:1px solid #9aa0aa"></div><div class="a" style="left:-50.7px;top:447.2px;width:120px;height:14px;line-height:14px;font-size:12px;font-weight:bold;color:#0e1830;text-align:center;white-space:pre;transform:rotate(-90deg);letter-spacing:-0.486px;text-indent:-0.486px">Property</div><div class="a" style="left:0;top:512px;width:23px;height:130px;border-radius:0 3px 3px 0;background:linear-gradient(90deg,#e8eaf8 0%,#c4d6f4 40%,#a8c8f0 50%,#8cbcf0 52%,#a0d0f6 80%,#cdeffb 100%);border-right:1px solid #7f858e;border-top:1px solid #9aa0aa;border-bottom:1px solid #9aa0aa"></div><div class="a" style="left:-50.7px;top:565.3px;width:120px;height:14px;line-height:14px;font-size:12px;font-weight:bold;color:#0e1830;text-align:center;white-space:pre;transform:rotate(-90deg);letter-spacing:-0.743px;text-indent:-0.743px">Diagram Backlog</div><svg class="a" style="left:3px;top:254px" width="19" height="21" viewBox="0 0 19 21">
<rect x="1" y="10" width="10" height="10" fill="#c83a3a"/><rect x="3" y="13" width="10" height="7" fill="#3a9a3a"/>
<rect x="6" y="2" width="12" height="14" fill="#e8c830" stroke="#8a7010"/><rect x="9" y="5" width="3" height="4" fill="#fff" stroke="#555" stroke-width="0.6"/>
<rect x="1" y="16" width="12" height="4" fill="#3a7ac8"/></svg><svg class="a" style="left:3px;top:387px" width="19" height="18" viewBox="0 0 19 18">
<path d="M2 4 H15 L17 6 V16 H2 Z" fill="#f4f4f4" stroke="#333" stroke-width="1.2"/><rect x="5" y="2" width="9" height="11" fill="#fff" stroke="#333"/>
<rect x="7" y="5" width="2" height="6" fill="#555"/><rect x="10" y="5" width="2" height="6" fill="#555"/></svg><svg class="a" style="left:4px;top:483px" width="17" height="18" viewBox="0 0 17 18">
<rect x="1" y="1" width="15" height="16" fill="#2a6ab8"/><rect x="3" y="3" width="11" height="3" fill="#fff"/>
<path d="M4 9 L7 12 L4 15 M8 9 L11 12 L8 15" stroke="#fff" stroke-width="1.5" fill="none"/></svg><svg class="a" style="left:3px;top:621px" width="19" height="18" viewBox="0 0 19 18">
<path d="M3 9 A5 5 0 0 1 9 4 L9 2 L12 5 L9 8 L9 6 A3 3 0 0 0 5 9 Z" fill="#3a9a9a"/><circle cx="6" cy="13" r="3.5" fill="none" stroke="#888"/>
<rect x="11" y="8" width="3" height="9" fill="#444"/><rect x="14.5" y="5" width="3" height="12" fill="#777"/></svg><svg class="a" style="left:23px;top:164px" width="37" height="528" viewBox="23 164 37 528">
<rect x="31" y="164" width="22" height="21.5" fill="#8cb4e0"/><rect x="32.5" y="165.5" width="19" height="18.5" fill="#8a8c92"/>
<path d="M37.5 168 L48.5 176.5 L43.5 177.5 L38.5 183 Z" fill="#3ad04a" stroke="#1a6a1a" stroke-width="0.8"/>
<path d="M44 184 L51 184 L51 177 Z" fill="#222"/>
<path d="M38 198 L42 191 L46 198 Z" fill="#a8a8a8"/>
<rect x="34.5" y="207.5" width="16" height="13" rx="3" fill="#f8b840" stroke="#c08020"/><line x1="37" y1="210.5" x2="48" y2="210.5" stroke="#6a4a10"/>
<rect x="36.5" y="231.5" width="14" height="11" rx="3" fill="#f8b840" stroke="#c08020"/><rect x="34.5" y="234.5" width="14" height="11" rx="3" fill="#f8b840" stroke="#c08020"/><line x1="37" y1="237.5" x2="46" y2="237.5" stroke="#6a4a10"/>
<path d="M34.5 257.5 H46 L50.5 263 L46 269.5 H34.5 Z" fill="#9a40c8" stroke="#5a1a8a"/><line x1="37" y1="261" x2="45" y2="261" stroke="#e0c0f0"/><line x1="37" y1="264" x2="45" y2="264" stroke="#e0c0f0"/>
<g stroke="#222" stroke-width="1" fill="none">
<path d="M34 289.5 H51" stroke-dasharray="2 1.5"/><path d="M38.5 287 V292 M46.5 287 V292"/>
<path d="M34 314.5 H44" stroke-dasharray="2 1.5"/><path d="M38 312 V317 M46.5 314.5 L51 311.5 M46.5 314.5 L51 317.5"/><circle cx="46" cy="314.5" r="2"/>
<path d="M41 339.5 H51" stroke-dasharray="2 1.5"/><path d="M47 337 V342 M38.5 339.5 L34 336.5 M38.5 339.5 L34 342.5"/><circle cx="39" cy="339.5" r="2"/>
<path d="M39 364.5 H46" stroke-dasharray="2 1"/><path d="M38 364.5 L34 361.5 M38 364.5 L34 367.5 M47 364.5 L51 361.5 M47 364.5 L51 367.5"/><circle cx="39.5" cy="364.5" r="2"/><circle cx="45.5" cy="364.5" r="2"/>
</g>
<rect x="34.5" y="382.5" width="16" height="12" fill="#b8e880" stroke="#4a9a2a"/><rect x="35" y="383" width="15" height="3" fill="#5ab83a"/><line x1="37" y1="389" x2="48" y2="389" stroke="#3a8a2a"/><line x1="37" y1="391.5" x2="46" y2="391.5" stroke="#3a8a2a"/>
<rect x="34.5" y="406.5" width="16" height="15" fill="#f0f0a0" stroke="#8a8a3a"/><rect x="35" y="407" width="15" height="3" fill="#d8d860"/><path d="M35 413 H50 M35 416 H50 M35 419 H50 M39 410 V421 M43 410 V421 M47 410 V421" stroke="#a0a050" stroke-width="0.8"/>
<path d="M35.5 432.5 H50.5 V444 H35.5 L37.5 438 Z" fill="#40b8c0" stroke="#1a7a8a"/><line x1="39" y1="437" x2="48" y2="437" stroke="#d0f0f0"/><line x1="39" y1="440" x2="48" y2="440" stroke="#d0f0f0"/>
<path d="M34.5 457.5 H45 L50.5 462 V469.5 H34.5 Z" fill="#3a7ac8" stroke="#1a4a8a"/><line x1="37" y1="462" x2="46" y2="462" stroke="#e0f0ff"/><line x1="37" y1="465" x2="47" y2="465" stroke="#e0f0ff"/>
<line x1="35" y1="489.5" x2="51" y2="489.5" stroke="#444" stroke-dasharray="1.5 1.5"/>
<line x1="31" y1="504.5" x2="53" y2="504.5" stroke="#c8c8c8" stroke-width="1.5"/>
<path d="M34.5 513.5 H41 L42.5 515.5 H50.5 V528.5 H34.5 Z" fill="#4a88d0" stroke="#1a4a8a"/><line x1="37" y1="519" x2="48" y2="519" stroke="#1a3a6a"/><path d="M45 530 L51.5 530 L51.5 523.5 Z" fill="#222"/>
<rect x="34.5" y="539.5" width="16" height="12" fill="#a8d0f0" stroke="#3a7ab8"/><rect x="37" y="544" width="5" height="4" fill="#fff" stroke="#3a7ab8" stroke-width="0.7"/><rect x="43" y="541.5" width="5" height="4" fill="#fff" stroke="#3a7ab8" stroke-width="0.7"/>
<line x1="34" y1="570.8" x2="51.5" y2="570.8" stroke="#888" stroke-width="1.5"/>
<rect x="35.5" y="591.5" width="16" height="10" fill="#a0d8f8" stroke="#2a7ab8" stroke-width="1.2"/>
<rect x="35.5" y="613.5" width="15" height="14" fill="#f0f0f0" stroke="#9a9a9a"/><path d="M37 626 Q40 618 43.5 620 Q47 618 49 626 Z" fill="#3a9a3a"/><circle cx="42" cy="620" r="2.5" fill="#f0d020"/>
<path d="M35 643 H39 L41 640.5 H46 L48 643 H51 V651 H35 Z" fill="#4a5a70"/><circle cx="43" cy="646.5" r="3" fill="#222" stroke="#aab" stroke-width="0.8"/>
<path d="M36.5 664.5 H50.5 Q51.5 664.5 51.5 666 V673 Q51.5 674.5 50.5 674.5 H41 L37 677.5 L38.5 674.5 H36.5 Q35.5 674.5 35.5 673 V666 Q35.5 664.5 36.5 664.5 Z" fill="#e8c0f0" stroke="#b070c8"/>
<path d="M39 668 H48 M39 671 H46" stroke="#b070c8"/>
<path d="M39 685 H47 L43 691 Z" fill="#444"/>
</svg>
</body></html>
